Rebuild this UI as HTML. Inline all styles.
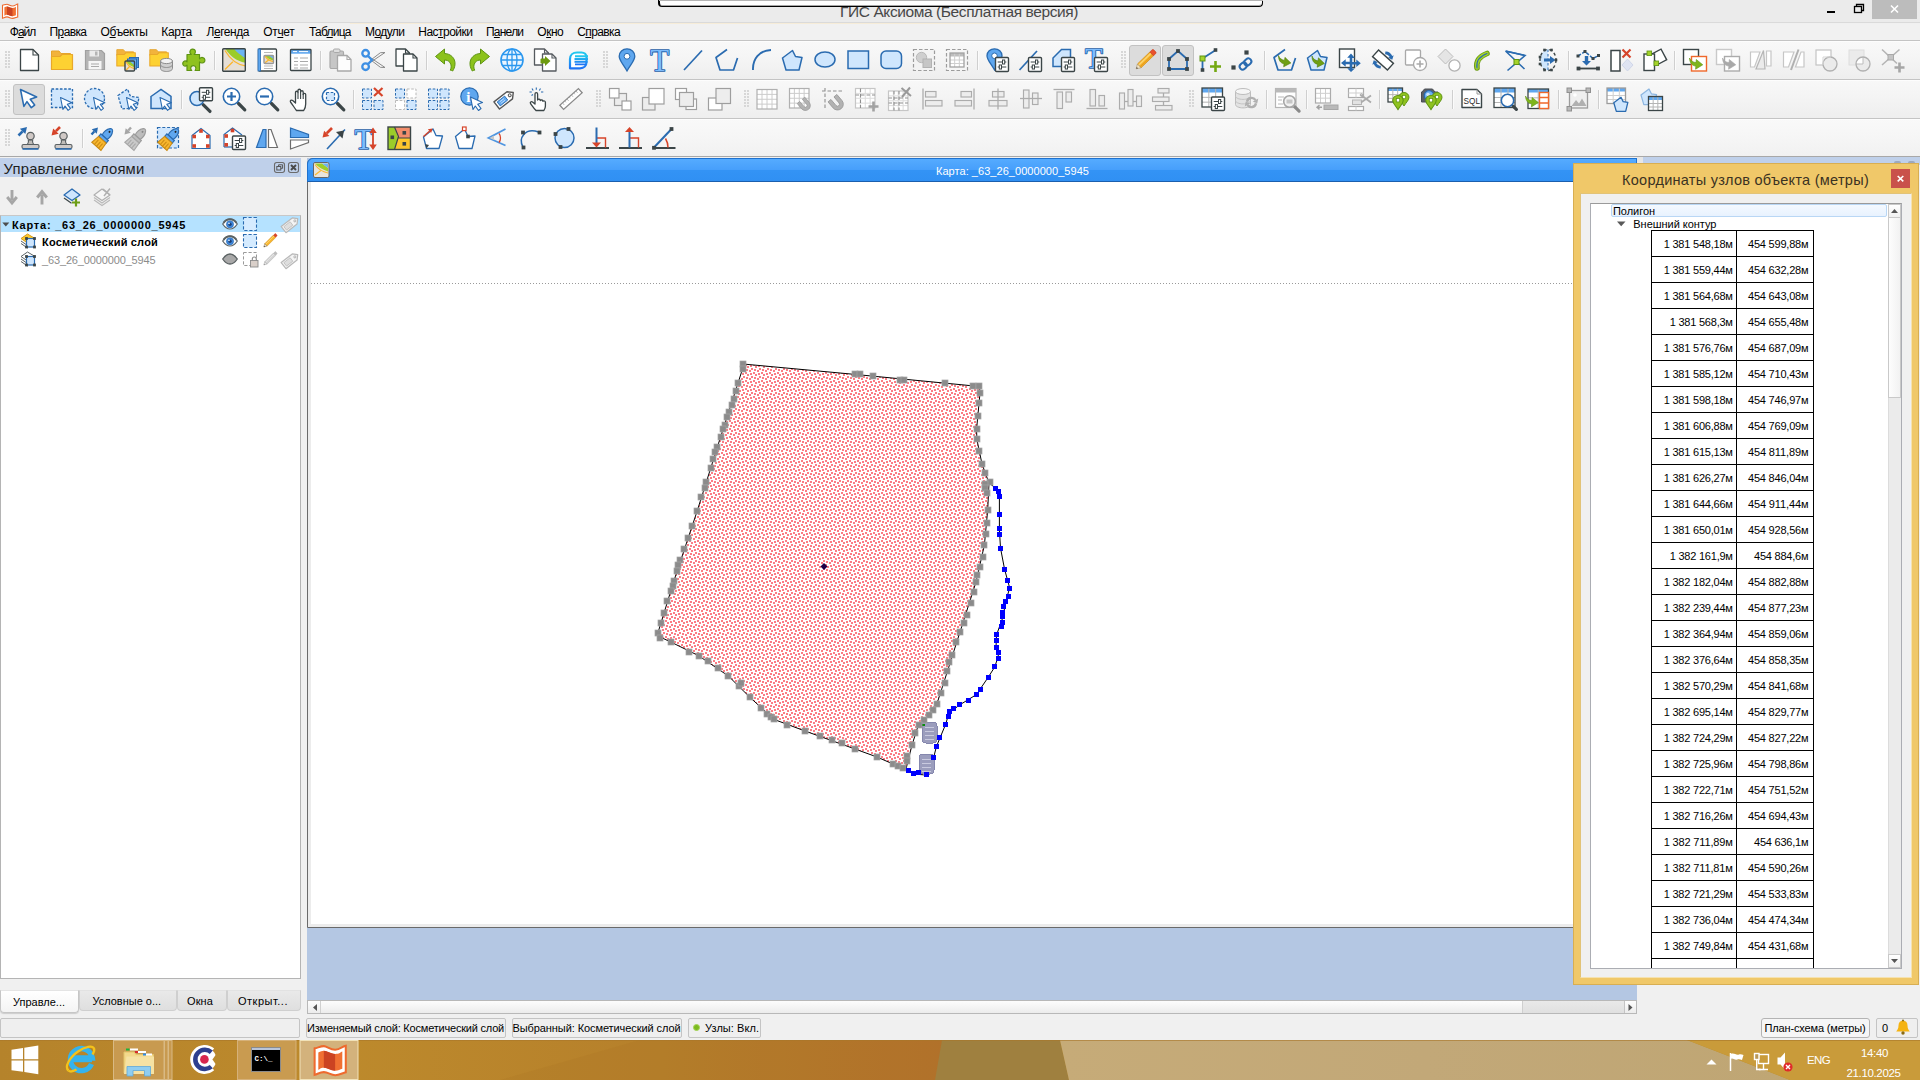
<!DOCTYPE html><html lang="ru"><head><meta charset="utf-8"><title>ГИС Аксиома</title><style>
*{box-sizing:border-box;margin:0;padding:0}
html,body{width:1920px;height:1080px;overflow:hidden;background:#f0f0f0;font-family:"Liberation Sans",sans-serif;font-size:11px;color:#000}
.a,.t,svg.i{position:absolute}
svg.i{overflow:visible}
.t{white-space:nowrap}
.a{display:block}
u{text-decoration:underline;text-underline-offset:1px}
</style></head><body>
<div class="a" style="left:0px;top:0px;width:1920px;height:23px;background:#ebebeb;border-bottom:1px solid #dadada"></div>
<div class="a" style="left:350px;top:23px;width:1250px;height:1px;background:#f6ecd8"></div>
<span class="t" style="left:840.0px;top:4.2px;font-size:15.5px;line-height:15.5px;letter-spacing:-0.407px;color:#484848;font-family:"Liberation Sans",sans-serif;">ГИС Аксиома (Бесплатная версия)</span>
<div class="a" style="left:658px;top:-3px;width:605px;height:10px;background:#fff;border:2px solid #000;border-top:0;border-bottom-width:1px;box-shadow:inset 0 -1px 0 rgba(0,0,0,.35);border-radius:0 0 4px 4px;border-left-width:2px;border-right-width:1px"></div>
<div class="a" style="left:659px;top:0px;width:604px;height:1px;background:#b4b4b4"></div>
<div class="a" style="left:1872px;top:0px;width:45px;height:19px;background:#bcbcbc"></div>
<svg class="i" style="left:1820px;top:0" width="100" height="22" viewBox="0 0 100 22"><rect x="7" y="11" width="8" height="2" fill="#000"/><rect x="34.5" y="6.5" width="7" height="6" fill="none" stroke="#000" stroke-width="1.3"/><path d="M36.5 6V4.5h7v6H42" fill="none" stroke="#000" stroke-width="1.3"/><path d="M71 5.5l7 7m0-7l-7 7" stroke="#fff" stroke-width="1.6"/></svg>
<svg class="i" style="left:0;top:0" width="22" height="22" viewBox="0 0 22 22"><path d="M2.500 5.300C4 5 5.500 4.200 7 4.200S10 6 12.500 6 16 4.300 17.700 4V17C16 17.400 14.500 18.400 12.500 18.400S9 16.900 7 16.900 4 17.800 2.500 18.200Z" fill="#fff" stroke="#ee6a2e" stroke-width="1.100"/><path d="M4.400 7.300C5.500 7 6 6.500 7 6.500S10 8 12.500 8 15 7 15.900 6.800V15.200C15 15.400 14 16.200 12.500 16.200S9 14.800 7 14.800 5.300 15.500 4.400 15.800Z" fill="#f07032"/><path d="M7 6.500C9 6.500 10 8 12.500 8V16.200C10 16.200 9 14.800 7 14.800Z" fill="#cb4322"/></svg>
<div class="a" style="left:0px;top:24px;width:1920px;height:17px;background:#f1f1f1"></div>
<span class="t" style="left:9.7px;top:26.4px;font-size:12px;line-height:12px;letter-spacing:-0.950px;color:#000">Ф<u>а</u>йл</span>
<span class="t" style="left:49.6px;top:26.4px;font-size:12px;line-height:12px;letter-spacing:-0.639px;color:#000">П<u>р</u>авка</span>
<span class="t" style="left:100.6px;top:26.4px;font-size:12px;line-height:12px;letter-spacing:-0.370px;color:#000">О<u>б</u>ъекты</span>
<span class="t" style="left:161.3px;top:26.4px;font-size:12px;line-height:12px;letter-spacing:-0.302px;color:#000">Кар<u>т</u>а</span>
<span class="t" style="left:206.5px;top:26.4px;font-size:12px;line-height:12px;letter-spacing:-0.448px;color:#000">Л<u>е</u>генда</span>
<span class="t" style="left:263.3px;top:26.4px;font-size:12px;line-height:12px;letter-spacing:-0.371px;color:#000">От<u>ч</u>ет</span>
<span class="t" style="left:309.0px;top:26.4px;font-size:12px;line-height:12px;letter-spacing:-0.764px;color:#000">Таб<u>л</u>ица</span>
<span class="t" style="left:365.0px;top:26.4px;font-size:12px;line-height:12px;letter-spacing:-0.614px;color:#000">М<u>о</u>дули</span>
<span class="t" style="left:418.3px;top:26.4px;font-size:12px;line-height:12px;letter-spacing:-0.538px;color:#000">Нас<u>т</u>ройки</span>
<span class="t" style="left:486.0px;top:26.4px;font-size:12px;line-height:12px;letter-spacing:-0.768px;color:#000">П<u>а</u>нели</span>
<span class="t" style="left:537.3px;top:26.4px;font-size:12px;line-height:12px;letter-spacing:-0.471px;color:#000">О<u>к</u>но</span>
<span class="t" style="left:577.3px;top:26.4px;font-size:12px;line-height:12px;letter-spacing:-0.625px;color:#000">С<u>п</u>равка</span>
<div class="a" style="left:0px;top:41px;width:1920px;height:38px;background:linear-gradient(#f9f9f9,#f5f5f5 45%,#eeeeee)"></div>
<div class="a" style="left:0px;top:80px;width:1920px;height:38px;background:linear-gradient(#f8f8f8,#f4f4f4 45%,#eeeeee)"></div>
<div class="a" style="left:0px;top:119px;width:1920px;height:37px;background:linear-gradient(#f9f9f9,#f6f6f6 45%,#f1f1f1)"></div>
<div class="a" style="left:0px;top:40px;width:1920px;height:1px;background:#c4c4c4"></div>
<div class="a" style="left:0px;top:41px;width:1920px;height:1px;background:#fdfdfd"></div>
<div class="a" style="left:0px;top:79px;width:1920px;height:1px;background:#c4c4c4"></div>
<div class="a" style="left:0px;top:80px;width:1920px;height:1px;background:#fdfdfd"></div>
<div class="a" style="left:0px;top:118px;width:1920px;height:1px;background:#c4c4c4"></div>
<div class="a" style="left:0px;top:119px;width:1920px;height:1px;background:#fdfdfd"></div>
<div class="a" style="left:0px;top:156px;width:1920px;height:1px;background:#a8a8a8"></div>
<div class="a" style="left:4.5px;top:51px;width:5px;height:18px;background:radial-gradient(circle at 1px 1px,#d6d6d6 .7px,transparent .95px) 0 0/3px 3px"></div>
<div class="a" style="left:602.5px;top:51px;width:5px;height:18px;background:radial-gradient(circle at 1px 1px,#d6d6d6 .7px,transparent .95px) 0 0/3px 3px"></div>
<div class="a" style="left:1120.5px;top:51px;width:5px;height:18px;background:radial-gradient(circle at 1px 1px,#d6d6d6 .7px,transparent .95px) 0 0/3px 3px"></div>
<div class="a" style="left:4.5px;top:90px;width:5px;height:18px;background:radial-gradient(circle at 1px 1px,#d6d6d6 .7px,transparent .95px) 0 0/3px 3px"></div>
<div class="a" style="left:595.5px;top:90px;width:5px;height:18px;background:radial-gradient(circle at 1px 1px,#d6d6d6 .7px,transparent .95px) 0 0/3px 3px"></div>
<div class="a" style="left:743.5px;top:90px;width:5px;height:18px;background:radial-gradient(circle at 1px 1px,#d6d6d6 .7px,transparent .95px) 0 0/3px 3px"></div>
<div class="a" style="left:1188.5px;top:90px;width:5px;height:18px;background:radial-gradient(circle at 1px 1px,#d6d6d6 .7px,transparent .95px) 0 0/3px 3px"></div>
<div class="a" style="left:4.5px;top:129px;width:5px;height:18px;background:radial-gradient(circle at 1px 1px,#d6d6d6 .7px,transparent .95px) 0 0/3px 3px"></div>
<div class="a" style="left:213.5px;top:51px;width:1px;height:19px;background:#cfcfcf"></div>
<div class="a" style="left:214.5px;top:51px;width:1px;height:19px;background:#fbfbfb"></div>
<div class="a" style="left:320px;top:51px;width:1px;height:19px;background:#cfcfcf"></div>
<div class="a" style="left:321px;top:51px;width:1px;height:19px;background:#fbfbfb"></div>
<div class="a" style="left:425.5px;top:51px;width:1px;height:19px;background:#cfcfcf"></div>
<div class="a" style="left:426.5px;top:51px;width:1px;height:19px;background:#fbfbfb"></div>
<div class="a" style="left:977px;top:51px;width:1px;height:19px;background:#cfcfcf"></div>
<div class="a" style="left:978px;top:51px;width:1px;height:19px;background:#fbfbfb"></div>
<div class="a" style="left:1264px;top:51px;width:1px;height:19px;background:#cfcfcf"></div>
<div class="a" style="left:1265px;top:51px;width:1px;height:19px;background:#fbfbfb"></div>
<div class="a" style="left:1567.5px;top:51px;width:1px;height:19px;background:#cfcfcf"></div>
<div class="a" style="left:1568.5px;top:51px;width:1px;height:19px;background:#fbfbfb"></div>
<div class="a" style="left:1673.5px;top:51px;width:1px;height:19px;background:#cfcfcf"></div>
<div class="a" style="left:1674.5px;top:51px;width:1px;height:19px;background:#fbfbfb"></div>
<div class="a" style="left:180.5px;top:90px;width:1px;height:19px;background:#cfcfcf"></div>
<div class="a" style="left:181.5px;top:90px;width:1px;height:19px;background:#fbfbfb"></div>
<div class="a" style="left:353px;top:90px;width:1px;height:19px;background:#cfcfcf"></div>
<div class="a" style="left:354px;top:90px;width:1px;height:19px;background:#fbfbfb"></div>
<div class="a" style="left:1266px;top:90px;width:1px;height:19px;background:#cfcfcf"></div>
<div class="a" style="left:1267px;top:90px;width:1px;height:19px;background:#fbfbfb"></div>
<div class="a" style="left:1306px;top:90px;width:1px;height:19px;background:#cfcfcf"></div>
<div class="a" style="left:1307px;top:90px;width:1px;height:19px;background:#fbfbfb"></div>
<div class="a" style="left:1379px;top:90px;width:1px;height:19px;background:#cfcfcf"></div>
<div class="a" style="left:1380px;top:90px;width:1px;height:19px;background:#fbfbfb"></div>
<div class="a" style="left:1452px;top:90px;width:1px;height:19px;background:#cfcfcf"></div>
<div class="a" style="left:1453px;top:90px;width:1px;height:19px;background:#fbfbfb"></div>
<div class="a" style="left:1558px;top:90px;width:1px;height:19px;background:#cfcfcf"></div>
<div class="a" style="left:1559px;top:90px;width:1px;height:19px;background:#fbfbfb"></div>
<div class="a" style="left:1598px;top:90px;width:1px;height:19px;background:#cfcfcf"></div>
<div class="a" style="left:1599px;top:90px;width:1px;height:19px;background:#fbfbfb"></div>
<div class="a" style="left:81.5px;top:129px;width:1px;height:19px;background:#cfcfcf"></div>
<div class="a" style="left:82.5px;top:129px;width:1px;height:19px;background:#fbfbfb"></div>
<div class="a" style="left:1129px;top:45px;width:32px;height:31px;background:#dcdcdc;border:1px solid #c2c2c2;border-radius:3px"></div>
<div class="a" style="left:1162px;top:45px;width:32px;height:31px;background:#dcdcdc;border:1px solid #c2c2c2;border-radius:3px"></div>
<div class="a" style="left:13px;top:84px;width:32px;height:31px;background:#dcdcdc;border:1px solid #c2c2c2;border-radius:3px"></div>
<svg class="i" style="left:17px;top:48px" width="24" height="24" viewBox="0 0 24 24"><path d="M3.5 1.5h12.5l5.5 5.5v15.5h-18z" fill="#fff" stroke="#3b4547" stroke-width="1.300" stroke-linejoin="round"/><path d="M16 1.5v5.5h5.5" fill="none" stroke="#3b4547" stroke-width="1.100"/></svg>
<svg class="i" style="left:50px;top:48px" width="24" height="24" viewBox="0 0 24 24"><g transform="translate(0 0) scale(1)"><path d="M1.500 3h7.500l2 2.500h9.500v4H1.500z" fill="#f2b33c" stroke="#e5a52c" stroke-width="1"/><path d="M1.500 21.500V8.500h8.500l2-2h10.500v15z" fill="#fdd132" stroke="#e9a82a" stroke-width="1.200" stroke-linejoin="round"/></g></svg>
<svg class="i" style="left:83px;top:48px" width="24" height="24" viewBox="0 0 24 24"><path d="M2.500 2.500h16l3 3v16h-19z" fill="#b5b5b5" stroke="#a0a0a0" stroke-width="1.200"/><rect x="6.5" y="2.5" width="9.5" height="6" fill="#ececec"/><rect x="12" y="3.5" width="2.5" height="4" fill="#b5b5b5"/><rect x="5.5" y="13" width="13" height="8.5" fill="#f5f5f5"/><path d="M8 16h8M8 18.500h8" fill="none" stroke="#aaa" stroke-width="1.200"/></svg>
<svg class="i" style="left:116px;top:48px" width="24" height="24" viewBox="0 0 24 24"><g transform="translate(-0.5 -1) scale(0.88)"><path d="M1.500 3h7.500l2 2.500h9.500v4H1.500z" fill="#f2b33c" stroke="#e5a52c" stroke-width="1"/><path d="M1.500 21.500V8.500h8.500l2-2h10.500v15z" fill="#fdd132" stroke="#e9a82a" stroke-width="1.200" stroke-linejoin="round"/></g><rect x="13.5" y="9.5" width="9" height="10" fill="#4e98e6" stroke="#2a6bb0" stroke-width="1"/><rect x="11.5" y="11" width="9" height="10" fill="#6fb0f0" stroke="#2a6bb0" stroke-width="1"/><rect x="9" y="13" width="9.5" height="10" fill="#e6dfd6"/><path d="M10.14 13L18.5 13 18.5 19.2 18.5 19.2C14.7 18.5 11.85 16 10.14 13Z" fill="#9bcc2a"/><path d="M13.75 13H18.5V17.2C17.075 16 15.65 15.5 13.75 13Z" fill="#6cb4f3"/><path d="M9.95 13.8C12.325 18 14.7 20 18.5 20.6M9.95 22.2L13.275 18.8" fill="none" stroke="#fbb62f" stroke-width="1.300"/><rect x="9" y="13" width="9.5" height="10" fill="none" rx="1" stroke="#3b4547" stroke-width="1.400"/></svg>
<svg class="i" style="left:149px;top:48px" width="24" height="24" viewBox="0 0 24 24"><g transform="translate(-0.5 -1) scale(0.88)"><path d="M1.500 3h7.500l2 2.500h9.500v4H1.500z" fill="#f2b33c" stroke="#e5a52c" stroke-width="1"/><path d="M1.500 21.500V8.500h8.500l2-2h10.500v15z" fill="#fdd132" stroke="#e9a82a" stroke-width="1.200" stroke-linejoin="round"/></g><path d="M11.500 13v7.500c0 1.700 2.700 3 6 3s6-1.300 6-3V13z" fill="#cfcfcf" stroke="#8d8d8d" stroke-width="1"/><ellipse cx="17.5" cy="13" rx="6" ry="2.6" fill="#f2f2f2" stroke="#8d8d8d" stroke-width="1"/><path d="M11.500 16.500c0 1.700 2.700 3 6 3s6-1.300 6-3" fill="none" stroke="#8d8d8d" stroke-width="1"/></svg>
<svg class="i" style="left:182px;top:48px" width="24" height="24" viewBox="0 0 24 24"><path d="M5 6.500h4.200c-1.300-1.200-1.600-2.700-.9-4 .8-1.500 3-1.900 4.300-.7 1.200 1.100 1 3.300-.4 4.700H17.500v4.300c1.200-1.300 2.800-1.600 4-.9 1.500.8 1.900 3 .7 4.300-1.100 1.200-3.300 1-4.700-.4V22.500h-4.400c1-1.300 1.100-2.800.3-3.900-.9-1.200-2.700-1.400-3.800-.4-1.200 1.100-1.200 3 .1 4.300H5v-5.300c-1.200 1-2.600 1-3.500.1-1-1-1-2.700.1-3.700 1-.9 2.400-.8 3.400.2z" fill="#8fc21f" stroke="#5e9413" stroke-width="1.200" stroke-linejoin="round"/></svg>
<svg class="i" style="left:222px;top:48px" width="24" height="24" viewBox="0 0 24 24"><rect x="0.7" y="0.7" width="22.6" height="22.6" fill="#e6dfd6"/><path d="M3.412 0.7L23.3 0.7 23.3 14.712 23.3 14.712C14.26 13.13 7.48 7.48 3.412 0.7Z" fill="#9bcc2a"/><path d="M12 0.7H23.3V10.192C19.91 7.48 16.52 6.35 12 0.7Z" fill="#6cb4f3"/><path d="M2.96 2.508C8.61 12 14.26 16.52 23.3 17.876M2.96 21.492L10.87 13.808" fill="none" stroke="#fbb62f" stroke-width="1.300"/><rect x="0.7" y="0.7" width="22.6" height="22.6" fill="none" rx="1" stroke="#3b4547" stroke-width="1.400"/></svg>
<svg class="i" style="left:255px;top:48px" width="24" height="24" viewBox="0 0 24 24"><rect x="3.5" y="1" width="18" height="22" fill="#fff" rx="1" stroke="#3b4547" stroke-width="1.300"/><rect x="3" y="1" width="2.6" height="22" fill="#5fa7ef" stroke="#2a6bb0" stroke-width=".8"/><path d="M9 4.500h9M9 18h9M9 20.500h9" fill="none" stroke="#b9b9b9" stroke-width="1"/><rect x="9" y="7.5" width="9.5" height="8" fill="#e6dfd6"/><path d="M10.14 7.5L18.5 7.5 18.5 12.46 18.5 12.46C14.7 11.9 11.85 9.9 10.14 7.5Z" fill="#9bcc2a"/><path d="M13.75 7.5H18.5V10.86C17.075 9.9 15.65 9.5 13.75 7.5Z" fill="#6cb4f3"/><path d="M9.95 8.14C12.325 11.5 14.7 13.1 18.5 13.58M9.95 14.86L13.275 12.14" fill="none" stroke="#fbb62f" stroke-width="1.300"/><rect x="9" y="7.5" width="9.5" height="8" fill="none" rx="1" stroke="#9a9a9a" stroke-width="1.400"/></svg>
<svg class="i" style="left:288px;top:48px" width="24" height="24" viewBox="0 0 24 24"><rect x="2.5" y="1.5" width="20.5" height="21" fill="#fff"/><rect x="2.5" y="1.5" width="20.5" height="4.2" fill="#5fa7ef"/><path d="M5 3.600h4M11 3.600h9" fill="none" stroke="#fff" stroke-width="1"/><path d="M6 10h4M12 10h8M6 13.500h4M12 13.500h8M6 17h4M12 17h8M6 20h4M12 20h8" fill="none" stroke="#a9a9a9" stroke-width="1"/><rect x="2.5" y="1.5" width="20.5" height="21" fill="none" rx="0.8" stroke="#3b4547" stroke-width="1.300"/></svg>
<svg class="i" style="left:328px;top:48px" width="24" height="24" viewBox="0 0 24 24"><rect x="2" y="3" width="13.5" height="17.5" fill="#c6c6c6" rx="1.5" stroke="#a8a8a8" stroke-width="1.200"/><rect x="5.5" y="1" width="6.5" height="3.5" fill="#dedede" rx="1.2" stroke="#a8a8a8" stroke-width="1"/><path d="M9.5 7.5h9.5l4 4v11.5h-13.5z" fill="#fdfdfd" stroke="#a8a8a8" stroke-width="1.300" stroke-linejoin="round"/><path d="M19 7.5v4h4" fill="none" stroke="#a8a8a8" stroke-width="1.100"/></svg>
<svg class="i" style="left:361px;top:48px" width="24" height="24" viewBox="0 0 24 24"><path d="M8.500 9L24 19.500l-4.600-.2L10.500 12.500zM8.500 15L24 4.500l-4.600.2L10.500 11.500z" fill="#f4f4f4" stroke="#8b8b8b" stroke-width="1" stroke-linejoin="round"/><circle cx="4.6" cy="5.3" r="3.3" fill="none" stroke="#3d8fe4" stroke-width="2.300"/><circle cx="4.6" cy="18.7" r="3.3" fill="none" stroke="#3d8fe4" stroke-width="2.300"/><path d="M6.800 7.800l4.200 4.200-4.200 4.200" fill="none" stroke="#3d8fe4" stroke-width="2.300"/></svg>
<svg class="i" style="left:394px;top:48px" width="24" height="24" viewBox="0 0 24 24"><path d="M2 1h9.5l4 4v13h-13.5z" fill="#fff" stroke="#3b4547" stroke-width="1.300" stroke-linejoin="round"/><path d="M11.5 1v4h4" fill="none" stroke="#3b4547" stroke-width="1.100"/><path d="M9.5 6h9.5l4 4v13h-13.5z" fill="#fff" stroke="#3b4547" stroke-width="1.300" stroke-linejoin="round"/><path d="M19 6v4h4" fill="none" stroke="#3b4547" stroke-width="1.100"/></svg>
<svg class="i" style="left:434px;top:48px" width="24" height="24" viewBox="0 0 24 24"><path d="M1.500 8.500L10.500 1v4.500c6 .2 11 4.500 10.500 11-.2 2.500-1.200 4.800-2.300 6.500-.8-.5-1.700-.8-2.400-.8 1.300-2.600 1.200-5.600-.5-7.800-1.300-1.600-3.200-2.400-5.300-2.400V16z" fill="#8cc21c" stroke="#5e9413" stroke-width="1" stroke-linejoin="round"/></svg>
<svg class="i" style="left:467px;top:48px" width="24" height="24" viewBox="0 0 24 24"><g transform="translate(24 0) scale(-1 1)"><path d="M1.500 8.500L10.500 1v4.500c6 .2 11 4.500 10.500 11-.2 2.500-1.200 4.800-2.300 6.500-.8-.5-1.700-.8-2.400-.8 1.300-2.600 1.200-5.600-.5-7.800-1.300-1.600-3.200-2.400-5.300-2.400V16z" fill="#8cc21c" stroke="#5e9413" stroke-width="1" stroke-linejoin="round"/></g></svg>
<svg class="i" style="left:500px;top:48px" width="24" height="24" viewBox="0 0 24 24"><circle cx="12" cy="12" r="11" fill="#eaf5ff" stroke="#2b97ee" stroke-width="1.600"/><ellipse cx="12" cy="12" rx="5" ry="11" fill="none" stroke="#2b97ee" stroke-width="1.300"/><path d="M12 1v22M1 12h22M2.800 6.500h18.400M2.800 17.500h18.400" fill="none" stroke="#2b97ee" stroke-width="1.300"/></svg>
<svg class="i" style="left:533px;top:48px" width="24" height="24" viewBox="0 0 24 24"><path d="M1.5 1h10l4 4v12h-14z" fill="#fff" stroke="#555a5f" stroke-width="1.300" stroke-linejoin="round"/><path d="M11.5 1v4h4" fill="none" stroke="#555a5f" stroke-width="1.100"/><path d="M9.5 6h9.5l4 4v13h-13.5z" fill="#fff" stroke="#555a5f" stroke-width="1.300" stroke-linejoin="round"/><path d="M19 6v4h4" fill="none" stroke="#555a5f" stroke-width="1.100"/><path d="M7.500 11.300c0-.5.400-.9.900-.9h3.600V8l5.500 5-5.500 5v-2.400H8.400c-.5 0-.9-.4-.9-.9z" fill="#6d9a0f"/></svg>
<svg class="i" style="left:566px;top:48px" width="24" height="24" viewBox="0 0 24 24"><defs><linearGradient id="lg578" x1="0" y1="0" x2="0" y2="1"><stop offset="0" stop-color="#22c9ee"/><stop offset="1" stop-color="#1f73f5"/></linearGradient></defs><path d="M4 20.300V11C4 7 7 4.500 11 4.500h4.500c3 0 5 2 5 4.800V14c0 3.500-2.500 6.300-6.500 6.300z" fill="#fff" stroke="url(#lg578)" stroke-width="2.200" stroke-linejoin="round"/><path d="M9 8.300h13M8.500 11h13.500M8.500 13.700h13M9 16.400h11" fill="none" stroke="url(#lg578)" stroke-width="1.900"/></svg>
<svg class="i" style="left:615px;top:48px" width="24" height="24" viewBox="0 0 24 24"><path d="M12 23C8 16 4.200 12.500 4.200 8.300 4.200 4 7.700.8 12 .8s7.800 3.200 7.800 7.500C19.800 12.500 16 16 12 23z" fill="#5fa7ef" stroke="#2a6bb0" stroke-width="1.300"/><circle cx="12" cy="8.3" r="2.9" fill="#fff" stroke="#2a6bb0" stroke-width="1"/></svg>
<svg class="i" style="left:648px;top:48px" width="24" height="24" viewBox="0 0 24 24"><text x="2.3" y="23.4" font-family="Liberation Serif,serif" font-size="31" fill="#7dbcfc" stroke="#1f5fa8" stroke-width="1.700" paint-order="stroke" stroke-linejoin="round">T</text></svg>
<svg class="i" style="left:681px;top:48px" width="24" height="24" viewBox="0 0 24 24"><path d="M3 22L21 2.500" fill="none" stroke="#2a6bb0" stroke-width="1.700"/></svg>
<svg class="i" style="left:714px;top:48px" width="24" height="24" viewBox="0 0 24 24"><path d="M14.500 1.500L3.500 9.500l4 12.500h13.500l4-12" fill="none" stroke="#2a6bb0" stroke-width="1.700" stroke-linejoin="round" transform="translate(-1.500 0)"/></svg>
<svg class="i" style="left:747px;top:48px" width="24" height="24" viewBox="0 0 24 24"><path d="M6 22C5.500 11 12 2.500 24 2" fill="none" stroke="#2a6bb0" stroke-width="1.900"/></svg>
<svg class="i" style="left:780px;top:48px" width="24" height="24" viewBox="0 0 24 24"><path d="M2.500 10L12.500 2.500 15.500 8.500 22 9.500 19 22H6Z" fill="#cfe6fd" stroke="#2a6bb0" stroke-width="1.500" stroke-linejoin="round"/></svg>
<svg class="i" style="left:813px;top:48px" width="24" height="24" viewBox="0 0 24 24"><ellipse cx="12" cy="11.5" rx="10" ry="7.6" fill="#cfe6fd" stroke="#2a6bb0" stroke-width="1.500"/></svg>
<svg class="i" style="left:846px;top:48px" width="24" height="24" viewBox="0 0 24 24"><rect x="2" y="3" width="20.5" height="17.5" fill="#cfe6fd" stroke="#2a6bb0" stroke-width="1.500"/></svg>
<svg class="i" style="left:879px;top:48px" width="24" height="24" viewBox="0 0 24 24"><rect x="2" y="3" width="20.5" height="17.5" fill="#cfe6fd" rx="5" stroke="#2a6bb0" stroke-width="1.500"/></svg>
<svg class="i" style="left:912px;top:48px" width="24" height="24" viewBox="0 0 24 24"><rect x="1.5" y="1.5" width="21" height="21" fill="#f3f3f3" stroke="#9c9c9c" stroke-width="1.200" stroke-dasharray="3.500 2"/><circle cx="9.5" cy="9.5" r="5.2" fill="#cfcfcf" stroke="#b9b9b9" stroke-width="1"/><rect x="11" y="11" width="8.5" height="8.5" fill="#c6c6c6" stroke="#b2b2b2" stroke-width="1"/></svg>
<svg class="i" style="left:945px;top:48px" width="24" height="24" viewBox="0 0 24 24"><rect x="1.5" y="1.5" width="21" height="21" fill="#f6f6f6" stroke="#9c9c9c" stroke-width="1.200" stroke-dasharray="3.500 2"/><rect x="5" y="5" width="14" height="14" fill="#fff"/><rect x="5" y="5" width="14" height="3.5" fill="#bdbdbd"/><path d="M5 12h14M5 15.5h14M9.66667 5v14M14.3333 5v14" fill="none" stroke="#cfcfcf" stroke-width="1"/><rect x="5" y="5" width="14" height="14" fill="none" stroke="#a2a2a2" stroke-width="1.300"/></svg>
<svg class="i" style="left:985px;top:48px" width="24" height="24" viewBox="0 0 24 24"><path d="M9.500 22C6 15.500 2 12 2 7.800 2 3.800 5.300.8 9.500.8S17 3.800 17 7.800C17 12 13 15.500 9.500 22z" fill="#5fa7ef" stroke="#2a6bb0" stroke-width="1.300"/><circle cx="9.5" cy="7.8" r="2.8" fill="#fff" stroke="#2a6bb0" stroke-width="1"/><rect x="10.5" y="9.5" width="13" height="14" fill="#fff" rx="1" stroke="#3b4547" stroke-width="1.400"/><path d="M12.7 14h8.6 M12.7 19h8.6" fill="none" stroke="#3b4547" stroke-width="1"/><rect x="17.5" y="12" width="2.2" height="4" fill="#fff" stroke="#3b4547" stroke-width="1"/><rect x="14.3" y="17" width="2.2" height="4" fill="#fff" stroke="#3b4547" stroke-width="1"/></svg>
<svg class="i" style="left:1018px;top:48px" width="24" height="24" viewBox="0 0 24 24"><path d="M1.500 22L19 3" fill="none" stroke="#2a6bb0" stroke-width="1.700"/><rect x="10.5" y="9.5" width="13" height="14" fill="#fff" rx="1" stroke="#3b4547" stroke-width="1.400"/><path d="M12.7 14h8.6 M12.7 19h8.6" fill="none" stroke="#3b4547" stroke-width="1"/><rect x="17.5" y="12" width="2.2" height="4" fill="#fff" stroke="#3b4547" stroke-width="1"/><rect x="14.3" y="17" width="2.2" height="4" fill="#fff" stroke="#3b4547" stroke-width="1"/></svg>
<svg class="i" style="left:1051px;top:48px" width="24" height="24" viewBox="0 0 24 24"><path d="M2 18.500V10L10.500 1.500h9V18.500z" fill="#cfe6fd" stroke="#2a6bb0" stroke-width="1.500"/><rect x="10.5" y="9.5" width="13" height="14" fill="#fff" rx="1" stroke="#3b4547" stroke-width="1.400"/><path d="M12.7 14h8.6 M12.7 19h8.6" fill="none" stroke="#3b4547" stroke-width="1"/><rect x="17.5" y="12" width="2.2" height="4" fill="#fff" stroke="#3b4547" stroke-width="1"/><rect x="14.3" y="17" width="2.2" height="4" fill="#fff" stroke="#3b4547" stroke-width="1"/></svg>
<svg class="i" style="left:1084px;top:48px" width="24" height="24" viewBox="0 0 24 24"><text x="1" y="20.3" font-family="Liberation Serif,serif" font-size="29" fill="#7dbcfc" stroke="#1f5fa8" stroke-width="1.700" paint-order="stroke" stroke-linejoin="round">T</text><rect x="10.5" y="9.5" width="13" height="14" fill="#fff" rx="1" stroke="#3b4547" stroke-width="1.400"/><path d="M12.7 14h8.6 M12.7 19h8.6" fill="none" stroke="#3b4547" stroke-width="1"/><rect x="17.5" y="12" width="2.2" height="4" fill="#fff" stroke="#3b4547" stroke-width="1"/><rect x="14.3" y="17" width="2.2" height="4" fill="#fff" stroke="#3b4547" stroke-width="1"/></svg>
<svg class="i" style="left:1133px;top:48px" width="24" height="24" viewBox="0 0 24 24"><g transform="translate(3.200 20.800) rotate(-44)"><path d="M4.200-2.600H21.500V2.600H4.200z" fill="#f8b62d" stroke="#cf8a17" stroke-width=".7"/><path d="M4.200-.9H21.500" fill="none" stroke="#fcd675" stroke-width="1.300"/><path d="M4.200 1.300H21.500" fill="none" stroke="#e79c1e" stroke-width="1"/><path d="M21.500-2.600h3c.8 0 1.300.5 1.300 1.300v2.600c0 .8-.5 1.300-1.300 1.300h-3z" fill="#e9512d" stroke="#c43d1e" stroke-width=".6"/><path d="M0 0L4.200-2.600V2.600z" fill="#f4e6cb" stroke="#a89166" stroke-width=".6"/><path d="M0 0l1.700-1v2z" fill="#444"/></g></svg>
<svg class="i" style="left:1166px;top:48px" width="24" height="24" viewBox="0 0 24 24"><path d="M12 3L21 11v10H3V11z" fill="none" stroke="#2a6bb0" stroke-width="1.800"/><rect x="10.1" y="1.1" width="3.8" height="3.8" fill="#3b4547"/><rect x="19.1" y="9.1" width="3.8" height="3.8" fill="#3b4547"/><rect x="19.1" y="19.1" width="3.8" height="3.8" fill="#3b4547"/><rect x="1.1" y="19.1" width="3.8" height="3.8" fill="#3b4547"/><rect x="1.1" y="9.1" width="3.8" height="3.8" fill="#3b4547"/></svg>
<svg class="i" style="left:1199px;top:48px" width="24" height="24" viewBox="0 0 24 24"><path d="M3.500 22V10.500L16 2.500" fill="none" stroke="#2a6bb0" stroke-width="1.800"/><rect x="14.7" y="0.2" width="3.6" height="3.6" fill="#3b4547"/><rect x="1.7" y="20.2" width="3.6" height="3.6" fill="#3b4547"/><rect x="1" y="8" width="5" height="5" fill="#a5d32a" stroke="#5e9413" stroke-width="1"/><path d="M11 18.500h11M16.500 13v11" fill="none" stroke="#74a812" stroke-width="2.600"/></svg>
<svg class="i" style="left:1232px;top:48px" width="24" height="24" viewBox="0 0 24 24"><rect x="12.4" y="2.4" width="4.2" height="4.2" fill="#3b4547"/><rect x="-0.6" y="17.4" width="4.2" height="4.2" fill="#3b4547"/><g transform="translate(13.500 16) rotate(-42)"><rect x="-6.8" y="-3" width="7.6" height="6" fill="none" rx="3" stroke="#2a6bb0" stroke-width="2"/><rect x="-0.8" y="-3" width="7.6" height="6" fill="none" rx="3" stroke="#2a6bb0" stroke-width="2"/></g></svg>
<svg class="i" style="left:1272px;top:48px" width="24" height="24" viewBox="0 0 24 24"><path d="M14.500 1.500L3.500 9.500l4 12.500h13.500l4-12" fill="none" stroke="#2a6bb0" stroke-width="1.700" stroke-linejoin="round" transform="translate(-1.500 0)"/><g transform="translate(6.500 7.500) rotate(8) scale(.95)"><path d="M0 0C1.500 2.800 4 4.200 7 4.200V1L14 6 7 11V7.800C3 7.800 .5 4.500 0 0Z" fill="#6f9f14" stroke="#547f0c" stroke-width=".600" stroke-linejoin="round"/></g></svg>
<svg class="i" style="left:1305px;top:48px" width="24" height="24" viewBox="0 0 24 24"><path d="M2.500 10L12.500 2.500 15.500 8.500 22 9.500 19 22H6Z" fill="#cfe6fd" stroke="#2a6bb0" stroke-width="1.500" stroke-linejoin="round"/><g transform="translate(7 8) rotate(8) scale(.95)"><path d="M0 0C1.500 2.800 4 4.200 7 4.200V1L14 6 7 11V7.800C3 7.800 .5 4.500 0 0Z" fill="#6f9f14" stroke="#547f0c" stroke-width=".600" stroke-linejoin="round"/></g></svg>
<svg class="i" style="left:1338px;top:48px" width="24" height="24" viewBox="0 0 24 24"><rect x="1.5" y="1" width="15" height="18.5" fill="#fff" stroke="#3b4547" stroke-width="1.400"/><path d="M13 5.500l3.800 4.500h-2.500v4h4v-2.500l4.500 3.800-4.500 3.800v-2.500h-4v4h2.500L13 24l-3.800-3.800h2.500v-4h-4v2.500L3 15l4.700-3.800v2.500h4v-4H9.200z" fill="#2a6bb0"/></svg>
<svg class="i" style="left:1371px;top:48px" width="24" height="24" viewBox="0 0 24 24"><g transform="translate(12 12) rotate(42)"><rect x="-10" y="-4.5" width="20" height="9" fill="#fff" stroke="#3b4547" stroke-width="1.400"/></g><path d="M16.500 4.500c3 .5 5 3 5.500 6l1.500-.3-2.500 4-3.500-3 1.800-.3c-.5-2-2-3.500-3.800-4zM7.500 19.500c-3-.5-5-3-5.500-6l-1.500.3 2.500-4 3.500 3-1.800.3c.5 2 2 3.500 3.800 4z" fill="#2a6bb0" transform="rotate(-15 12 12)"/></svg>
<svg class="i" style="left:1404px;top:48px" width="24" height="24" viewBox="0 0 24 24"><rect x="1.5" y="2" width="15" height="15" fill="#fff" rx="1" stroke="#a9a9a9" stroke-width="1.300"/><circle cx="16" cy="16" r="6.5" fill="#fff" stroke="#a9a9a9" stroke-width="1.300"/><path d="M12.500 16h7M16 12.500v7" fill="none" stroke="#a9a9a9" stroke-width="1.600"/></svg>
<svg class="i" style="left:1437px;top:48px" width="24" height="24" viewBox="0 0 24 24"><path d="M8.500 1L16 8.500 8.500 16 1 8.500z" fill="#e5e5e5" stroke="#bdbdbd" stroke-width="1"/><circle cx="17.5" cy="17.5" r="5.6" fill="#fff" stroke="#b2b2b2" stroke-width="1.300"/></svg>
<svg class="i" style="left:1470px;top:48px" width="24" height="24" viewBox="0 0 24 24"><path d="M7 20C6 14 9 8.500 17 5.500" fill="none" stroke="#6d9d16" stroke-width="5.600" stroke-linecap="round"/><path d="M7 20C6 14 9 8.500 17 5.500" fill="none" stroke="#a6d32c" stroke-width="3.500" stroke-linecap="round"/><path d="M7 20C6 14 9 8.500 17 5.500" fill="none" stroke="#2a6bb0" stroke-width="1.100" stroke-linecap="round"/></svg>
<svg class="i" style="left:1503px;top:48px" width="24" height="24" viewBox="0 0 24 24"><path d="M2.500 3L22 7.500 4.500 22.500M21.500 21L2.500 3" fill="none" stroke="#2a6bb0" stroke-width="1.600"/><path d="M3 3.200L21.500 7.300" fill="none" stroke="#2a6bb0" stroke-width="1.600"/><rect x="11" y="11.5" width="5" height="5" fill="#a5d32a" stroke="#5e9413" stroke-width="1"/></svg>
<svg class="i" style="left:1536px;top:48px" width="24" height="24" viewBox="0 0 24 24"><path d="M12 1.500A7.500 10.500 0 0 0 12 22.500z" fill="#cfe6fd"/><ellipse cx="12" cy="12" rx="8" ry="10.5" fill="none" stroke="#3b4547" stroke-width="1.400" stroke-dasharray="3 2.600"/><path d="M12 1.500v21" fill="none" stroke="#2a6bb0" stroke-width="1" stroke-dasharray="2.500 2"/><path d="M8 10.500h6V8l5.500 4-5.500 4v-2.500H8z" fill="#2a6bb0"/><rect x="7.2" y="0.7" width="2.6" height="2.6" fill="#3b4547"/><rect x="14.2" y="0.7" width="2.6" height="2.6" fill="#3b4547"/><rect x="2.7" y="7.7" width="2.6" height="2.6" fill="#3b4547"/><rect x="2.7" y="14.7" width="2.6" height="2.6" fill="#3b4547"/><rect x="7.2" y="20.7" width="2.6" height="2.6" fill="#3b4547"/><rect x="14.2" y="20.7" width="2.6" height="2.6" fill="#3b4547"/><rect x="18.7" y="10.7" width="2.6" height="2.6" fill="#3b4547"/></svg>
<svg class="i" style="left:1576px;top:48px" width="24" height="24" viewBox="0 0 24 24"><path d="M2 8l7-4.500 8 7 5.500-3" fill="none" stroke="#2a6bb0" stroke-width="1.500" stroke-dasharray="3.500 1.500"/><rect x="0.5" y="6.5" width="3" height="3" fill="#3b4547"/><rect x="7.5" y="2" width="3" height="3" fill="#3b4547"/><rect x="15.5" y="9" width="3" height="3" fill="#3b4547"/><rect x="21" y="6" width="3" height="3" fill="#3b4547"/><path d="M2 20.500h21" fill="none" stroke="#3b4547" stroke-width="1.800"/><rect x="0.6" y="18.6" width="3.8" height="3.8" fill="#3b4547"/><rect x="20.1" y="18.6" width="3.8" height="3.8" fill="#3b4547"/><path d="M8 8.500h3.400v5h2.800l-4.500 4.500-4.500-4.500H8z" fill="#2a6bb0" transform="translate(.8 -.5)"/></svg>
<svg class="i" style="left:1609px;top:48px" width="24" height="24" viewBox="0 0 24 24"><rect x="2" y="2.5" width="9" height="20.5" fill="#fff" stroke="#3b4547" stroke-width="1.500"/><path d="M13.500 1.500l8 8M21.500 1.500l-8 8" fill="none" stroke="#d6442a" stroke-width="2.200"/><path d="M18.500 11l5.500 6-5.500 6-5.500-6z" fill="#dfe4f2" stroke="#c9d0e6" stroke-width=".8"/></svg>
<svg class="i" style="left:1642px;top:48px" width="24" height="24" viewBox="0 0 24 24"><g transform="translate(17 9) rotate(-28)"><rect x="-5.5" y="-6" width="11" height="12" fill="#fff" stroke="#3b4547" stroke-width="1.400"/></g><rect x="2" y="6" width="10.5" height="16.5" fill="#fff" stroke="#3b4547" stroke-width="1.400"/><rect x="5" y="3" width="4.6" height="4.6" fill="#a5d32a" stroke="#5e9413" stroke-width=".8"/><rect x="12" y="13" width="4.6" height="4.6" fill="#a5d32a" stroke="#5e9413" stroke-width=".8"/></svg>
<svg class="i" style="left:1682px;top:48px" width="24" height="24" viewBox="0 0 24 24"><rect x="1.5" y="1.5" width="15" height="15" fill="#fff" stroke="#3b4547" stroke-width="1.400"/><rect x="9.5" y="8.5" width="15" height="14.5" fill="#fff" stroke="#f0682b" stroke-width="1.400"/><g transform="translate(7.500 10) rotate(4) scale(.98)"><path d="M0 0C1.500 2.800 4 4.200 7 4.200V1L14 6 7 11V7.800C3 7.800 .5 4.500 0 0Z" fill="#7fb51c" stroke="#5e9413" stroke-width=".600" stroke-linejoin="round"/></g></svg>
<svg class="i" style="left:1715px;top:48px" width="24" height="24" viewBox="0 0 24 24"><rect x="1.5" y="1.5" width="15" height="15" fill="#fff" stroke="#c9c9c9" stroke-width="1.400"/><rect x="9.5" y="8.5" width="15" height="14.5" fill="#fff" stroke="#ababab" stroke-width="1.400"/><g transform="translate(7.500 10) rotate(4) scale(.98)"><path d="M0 0C1.500 2.800 4 4.200 7 4.200V1L14 6 7 11V7.800C3 7.800 .5 4.500 0 0Z" fill="#a9a9a9" stroke="#a9a9a9" stroke-width=".600" stroke-linejoin="round"/></g></svg>
<svg class="i" style="left:1748px;top:48px" width="24" height="24" viewBox="0 0 24 24"><path d="M2.500 4h9.500L6.500 19H2.500zM18.500 3h4.500v15h-4.500z" fill="#fff" stroke="#c6c6c6" stroke-width="1.200"/><path d="M15.500 2.500L8 21h9z" fill="#ebebeb" stroke="#b5b5b5" stroke-width="1.200"/></svg>
<svg class="i" style="left:1781px;top:48px" width="24" height="24" viewBox="0 0 24 24"><path d="M2.500 4h10.500L7.500 19H2.500zM20 4h3v15H14.500z" fill="#fff" stroke="#c6c6c6" stroke-width="1.200"/><path d="M17.500 1.500L10 22" fill="none" stroke="#b0b0b0" stroke-width="2"/></svg>
<svg class="i" style="left:1814px;top:48px" width="24" height="24" viewBox="0 0 24 24"><rect x="2" y="2" width="15" height="15" fill="#fff" stroke="#c4c4c4" stroke-width="1.200"/><circle cx="16" cy="16" r="7" fill="#ebebeb" stroke="#b0b0b0" stroke-width="1.300"/><path d="M9 17V9h8" fill="none" stroke="#d5d5d5" stroke-width="1"/></svg>
<svg class="i" style="left:1847px;top:48px" width="24" height="24" viewBox="0 0 24 24"><rect x="2" y="2" width="15" height="15" fill="#ebebeb" stroke="#dedede" stroke-width="1"/><circle cx="16" cy="16" r="7" fill="#ebebeb"/><path d="M16 16V9A7 7 0 0 0 9 16z" fill="#fff"/><path d="M9 16h7V9" fill="none" stroke="#bdbdbd" stroke-width="1"/><circle cx="16" cy="16" r="7" fill="none" stroke="#b0b0b0" stroke-width="1.300"/></svg>
<svg class="i" style="left:1880px;top:48px" width="24" height="24" viewBox="0 0 24 24"><path d="M2 1.500L17 15.500M19.500 1.500L2 17" fill="none" stroke="#b5b5b5" stroke-width="1.600"/><rect x="8" y="6.5" width="5.5" height="5.5" fill="#c4c4c4" stroke="#a9a9a9" stroke-width="1"/><path d="M14.500 19.500h10M19.500 14.500v10" fill="none" stroke="#a6a6a6" stroke-width="2.600"/></svg>
<svg class="i" style="left:17px;top:87px" width="24" height="24" viewBox="0 0 24 24"><g transform="translate(3.5 2.5) scale(1.35)"><path d="M0 0L12 5.500 7.200 7.200 10.500 11.500 8 13.500 4.800 9 2.500 12.500Z" fill="#fff" stroke="#2a6bb0" stroke-width="1.150" stroke-linejoin="round"/></g></svg>
<svg class="i" style="left:50px;top:87px" width="24" height="24" viewBox="0 0 24 24"><rect x="1.5" y="2" width="21" height="18.5" fill="#cfe6fd" stroke="#2a6bb0" stroke-width="1.300" stroke-dasharray="2.600 1.600"/><g transform="translate(10.5 10.5) scale(0.95)"><path d="M0 0L12 5.500 7.200 7.200 10.500 11.500 8 13.500 4.800 9 2.500 12.500Z" fill="#fff" stroke="#2a6bb0" stroke-width="1.150" stroke-linejoin="round"/></g></svg>
<svg class="i" style="left:83px;top:87px" width="24" height="24" viewBox="0 0 24 24"><circle cx="11.5" cy="11.5" r="10" fill="#cfe6fd" stroke="#2a6bb0" stroke-width="1.300" stroke-dasharray="2.600 1.600"/><g transform="translate(10.5 10.5) scale(0.95)"><path d="M0 0L12 5.500 7.200 7.200 10.500 11.500 8 13.500 4.800 9 2.500 12.500Z" fill="#fff" stroke="#2a6bb0" stroke-width="1.150" stroke-linejoin="round"/></g></svg>
<svg class="i" style="left:116px;top:87px" width="24" height="24" viewBox="0 0 24 24"><path d="M2 8.500L11.500 2l3 7.500 8.500 1L21 20.500 6 22z" fill="#cfe6fd" stroke="#2a6bb0" stroke-width="1.300" stroke-dasharray="2.600 1.600"/><g transform="translate(10.5 10.5) scale(0.95)"><path d="M0 0L12 5.500 7.200 7.200 10.500 11.500 8 13.500 4.800 9 2.500 12.500Z" fill="#fff" stroke="#2a6bb0" stroke-width="1.150" stroke-linejoin="round"/></g></svg>
<svg class="i" style="left:149px;top:87px" width="24" height="24" viewBox="0 0 24 24"><path d="M2 9.500L12 2.500 22 9.500V21.500H2z" fill="#cfe6fd" stroke="#2a6bb0" stroke-width="1.500"/><g transform="translate(11 10.5) scale(0.95)"><path d="M0 0L12 5.500 7.200 7.200 10.500 11.500 8 13.500 4.800 9 2.500 12.500Z" fill="#fff" stroke="#2a6bb0" stroke-width="1.150" stroke-linejoin="round"/></g></svg>
<svg class="i" style="left:189px;top:87px" width="24" height="24" viewBox="0 0 24 24"><path d="M14.1497 17.6497L20.9497 24.4497" fill="none" stroke="#3b4547" stroke-width="3.200" stroke-linecap="round"/><circle cx="8" cy="11.5" r="7" fill="#cfe6fd" stroke="#2a6bb0" stroke-width="1.600"/><rect x="10.5" y="0.8" width="13" height="13" fill="#fff" rx="1" stroke="#3b4547" stroke-width="1.400"/><path d="M12.7 5.3h8.6 M12.7 10.3h8.6" fill="none" stroke="#3b4547" stroke-width="1"/><rect x="17.5" y="3.3" width="2.2" height="4" fill="#fff" stroke="#3b4547" stroke-width="1"/><rect x="14.3" y="8.3" width="2.2" height="4" fill="#fff" stroke="#3b4547" stroke-width="1"/></svg>
<svg class="i" style="left:222px;top:87px" width="24" height="24" viewBox="0 0 24 24"><path d="M16.4983 16.4983L22.7983 22.7983" fill="none" stroke="#3b4547" stroke-width="3.200" stroke-linecap="round"/><circle cx="9.5" cy="9.5" r="8.2" fill="#fff" stroke="#2a6bb0" stroke-width="1.600"/><path d="M5 9.500h9M9.500 5v9" fill="none" stroke="#2a6bb0" stroke-width="2.200"/></svg>
<svg class="i" style="left:255px;top:87px" width="24" height="24" viewBox="0 0 24 24"><path d="M16.4983 16.4983L22.7983 22.7983" fill="none" stroke="#3b4547" stroke-width="3.200" stroke-linecap="round"/><circle cx="9.5" cy="9.5" r="8.2" fill="#fff" stroke="#2a6bb0" stroke-width="1.600"/><path d="M5 9.500h9" fill="none" stroke="#2a6bb0" stroke-width="2.200"/></svg>
<svg class="i" style="left:288px;top:87px" width="24" height="24" viewBox="0 0 24 24"><path d="M8.500 23.500C6.500 21 4.500 17.500 2.500 15c-.8-1.200.8-2.600 2.200-1.500L7.500 16V5.500c0-1.700 2.500-1.700 2.500 0V3.500c0-1.700 2.600-1.700 2.600 0V5c0-1.700 2.600-1.700 2.600 0v2.500c0-1.600 2.500-1.600 2.500 0V17c0 3-1 5-2 6.500z" fill="#fff" stroke="#3b4547" stroke-width="1.300" stroke-linejoin="round"/><path d="M10 5.500V12M12.600 5V12M15.200 7V12" fill="none" stroke="#3b4547" stroke-width="1.100"/></svg>
<svg class="i" style="left:321px;top:87px" width="24" height="24" viewBox="0 0 24 24"><path d="M16.4983 16.4983L22.7983 22.7983" fill="none" stroke="#3b4547" stroke-width="3.200" stroke-linecap="round"/><circle cx="9.5" cy="9.5" r="8.2" fill="#fff" stroke="#2a6bb0" stroke-width="1.600"/><rect x="5.5" y="5.5" width="8" height="8" fill="#cfe6fd" stroke="#2a6bb0" stroke-width="1.200" stroke-dasharray="2.600 1.600"/></svg>
<svg class="i" style="left:361px;top:87px" width="24" height="24" viewBox="0 0 24 24"><rect x="1.5" y="2" width="9" height="9" fill="#cfe6fd" stroke="#2a6bb0" stroke-width="1" stroke-dasharray="2.600 1.600"/><rect x="1.5" y="13.5" width="9" height="9" fill="#cfe6fd" stroke="#2a6bb0" stroke-width="1" stroke-dasharray="2.600 1.600"/><rect x="13" y="13.5" width="9" height="9" fill="#cfe6fd" stroke="#2a6bb0" stroke-width="1" stroke-dasharray="2.600 1.600"/><path d="M13 1l8.500 8M21.500 1l-8.500 8" fill="none" stroke="#d6442a" stroke-width="2.200"/></svg>
<svg class="i" style="left:394px;top:87px" width="24" height="24" viewBox="0 0 24 24"><rect x="1.5" y="2" width="9" height="9" fill="#cfe6fd" stroke="#2a6bb0" stroke-width="1" stroke-dasharray="2.600 1.600"/><rect x="13" y="2" width="9" height="9" fill="#fff" stroke="#b9b9b9" stroke-width="1" stroke-dasharray="2.600 1.600"/><rect x="1.5" y="13.5" width="9" height="9" fill="#fff" stroke="#b9b9b9" stroke-width="1" stroke-dasharray="2.600 1.600"/><rect x="13" y="13.5" width="9" height="9" fill="#cfe6fd" stroke="#2a6bb0" stroke-width="1" stroke-dasharray="2.600 1.600"/></svg>
<svg class="i" style="left:427px;top:87px" width="24" height="24" viewBox="0 0 24 24"><rect x="1.5" y="2" width="9" height="9" fill="#cfe6fd" stroke="#2a6bb0" stroke-width="1" stroke-dasharray="2.600 1.600"/><rect x="13" y="2" width="9" height="9" fill="#cfe6fd" stroke="#2a6bb0" stroke-width="1" stroke-dasharray="2.600 1.600"/><rect x="1.5" y="13.5" width="9" height="9" fill="#cfe6fd" stroke="#2a6bb0" stroke-width="1" stroke-dasharray="2.600 1.600"/><rect x="13" y="13.5" width="9" height="9" fill="#cfe6fd" stroke="#2a6bb0" stroke-width="1" stroke-dasharray="2.600 1.600"/></svg>
<svg class="i" style="left:460px;top:87px" width="24" height="24" viewBox="0 0 24 24"><circle cx="9.5" cy="9.5" r="8.7" fill="#5fa7ef" stroke="#2a6bb0" stroke-width="1.200"/><text x="6.3" y="15" font-family="Liberation Serif,serif" font-size="15" font-weight="bold" fill="#fff">i</text><g transform="translate(10.5 10) scale(1)"><path d="M0 0L12 5.500 7.200 7.200 10.500 11.500 8 13.500 4.800 9 2.500 12.500Z" fill="#fff" stroke="#2a6bb0" stroke-width="1.150" stroke-linejoin="round"/></g></svg>
<svg class="i" style="left:493px;top:87px" width="24" height="24" viewBox="0 0 24 24"><g transform="translate(12 12) rotate(-38)"><path d="M-10.500-4.500H6l4.500 4.500L6 4.500h-16.500z" fill="#fff" stroke="#555" stroke-width="1.400" stroke-linejoin="round"/><circle cx="6" cy="0" r="1.4" fill="none" stroke="#555" stroke-width="1"/><rect x="-8" y="-2.5" width="9.5" height="5" fill="#5fa7ef" stroke="#2a6bb0" stroke-width=".8"/><path d="M-6-1h5.500M-6 1h5.500" fill="none" stroke="#cfe6fd" stroke-width=".8"/></g></svg>
<svg class="i" style="left:526px;top:87px" width="24" height="24" viewBox="0 0 24 24"><path d="M10 23.500C8 21.500 6 18.500 4.500 16.500c-.8-1.200.8-2.400 2-1.500L9 17V7c0-1.800 2.600-1.800 2.600 0v6c.8-1.200 2.600-1 2.700.5.900-1 2.600-.6 2.600.8.900-.8 2.500-.3 2.500 1V19c0 2-.8 3.500-1.500 4.500z" fill="#fff" stroke="#3b4547" stroke-width="1.300" stroke-linejoin="round"/><path d="M6 1.500l1.200 2M10.300.5v2.300M14.500 1.500l-1.200 2M3.500 5h2.300M15 5h2.300M5.500 8.500l1.500-1" fill="none" stroke="#2a6bb0" stroke-width="1.100"/></svg>
<svg class="i" style="left:559px;top:87px" width="24" height="24" viewBox="0 0 24 24"><g transform="translate(12 12) rotate(-42)"><rect x="-12.5" y="-2.8" width="25" height="5.6" fill="#fff" stroke="#8a8a8a" stroke-width="1.300"/><path d="M-9-2.800v2.500M-6-2.800v1.800M-3-2.800v2.500M0-2.800v1.800M3-2.800v2.500M6-2.800v1.800M9-2.800v2.500" fill="none" stroke="#aaa" stroke-width=".9"/></g></svg>
<svg class="i" style="left:608px;top:87px" width="24" height="24" viewBox="0 0 24 24"><rect x="6.5" y="6.5" width="12" height="12" fill="#ededed" stroke="#9e9e9e" stroke-width="1.200"/><rect x="1.5" y="1.5" width="9.5" height="9.5" fill="#fff" stroke="#9e9e9e" stroke-width="1.200"/><rect x="14" y="14" width="9" height="9" fill="#fff" stroke="#9e9e9e" stroke-width="1.200"/></svg>
<svg class="i" style="left:641px;top:87px" width="24" height="24" viewBox="0 0 24 24"><rect x="1.5" y="10.5" width="12.5" height="12.5" fill="#ededed" stroke="#9e9e9e" stroke-width="1.200"/><rect x="8" y="1.5" width="15" height="15.5" fill="#fff" stroke="#9e9e9e" stroke-width="1.200"/></svg>
<svg class="i" style="left:674px;top:87px" width="24" height="24" viewBox="0 0 24 24"><rect x="1.5" y="1.5" width="11" height="11" fill="#fff" stroke="#9e9e9e" stroke-width="1.200"/><rect x="12" y="12" width="10.5" height="10.5" fill="#fff" stroke="#9e9e9e" stroke-width="1.200"/><rect x="5.5" y="5.5" width="14" height="14" fill="#ededed" stroke="#9e9e9e" stroke-width="1.200"/></svg>
<svg class="i" style="left:707px;top:87px" width="24" height="24" viewBox="0 0 24 24"><rect x="1.5" y="11" width="13.5" height="12" fill="#fff" stroke="#9e9e9e" stroke-width="1.200"/><rect x="9" y="1.5" width="14.5" height="15" fill="#ededed" stroke="#9e9e9e" stroke-width="1.200"/></svg>
<svg class="i" style="left:755px;top:87px" width="24" height="24" viewBox="0 0 24 24"><rect x="2" y="2.5" width="20" height="19.5" fill="#fff"/><path d="M7 2.5v19.5M2 7.375h20M12 2.5v19.5M2 12.25h20M17 2.5v19.5M2 17.125h20" fill="none" stroke="#cccccc" stroke-width="1"/><rect x="2" y="2.5" width="20" height="19.5" fill="none" stroke="#b0b0b0" stroke-width="1.200"/></svg>
<svg class="i" style="left:788px;top:87px" width="24" height="24" viewBox="0 0 24 24"><rect x="1.5" y="1.5" width="19.5" height="19.5" fill="#fff"/><path d="M6.375 1.5v19.5M1.5 6.375h19.5M11.25 1.5v19.5M1.5 11.25h19.5M16.125 1.5v19.5M1.5 16.125h19.5" fill="none" stroke="#cccccc" stroke-width="1"/><rect x="1.5" y="1.5" width="19.5" height="19.5" fill="none" stroke="#b0b0b0" stroke-width="1.200"/><g transform="translate(16.500 17.500) rotate(-40) scale(.9)"><path d="M-5.500-6v7.500a5.500 5.500 0 0 0 11 0V-6h-3.600v7.500a1.900 1.900 0 0 1-3.800 0V-6z" fill="#b2b2b2" stroke="#9a9a9a" stroke-width=".8"/></g></svg>
<svg class="i" style="left:821px;top:87px" width="24" height="24" viewBox="0 0 24 24"><path d="M1 4h22M4 1v22" fill="none" stroke="#8f8f8f" stroke-width="1.100" stroke-dasharray="3.500 2"/><g transform="translate(15.500 16) rotate(-40) scale(1.05)"><path d="M-5.500-6v7.500a5.500 5.500 0 0 0 11 0V-6h-3.600v7.500a1.900 1.900 0 0 1-3.800 0V-6z" fill="#b2b2b2" stroke="#9a9a9a" stroke-width=".8"/></g></svg>
<svg class="i" style="left:854px;top:87px" width="24" height="24" viewBox="0 0 24 24"><rect x="1.5" y="1.5" width="19.5" height="19.5" fill="#fff"/><path d="M6.375 1.5v19.5M1.5 6.375h19.5M11.25 1.5v19.5M1.5 11.25h19.5M16.125 1.5v19.5M1.5 16.125h19.5" fill="none" stroke="#dcdcdc" stroke-width="1"/><rect x="1.5" y="1.5" width="19.5" height="19.5" fill="none" stroke="#c6c6c6" stroke-width="1.200"/><path d="M1.500 8h19.500M6.500 1.500v19.500" fill="none" stroke="#8f8f8f" stroke-width="1.100" stroke-dasharray="3.500 2"/><path d="M14.500 19.500h10M19.500 14.500v10" fill="none" stroke="#a2a2a2" stroke-width="2.600"/></svg>
<svg class="i" style="left:887px;top:87px" width="24" height="24" viewBox="0 0 24 24"><rect x="1.5" y="4" width="19.5" height="19.5" fill="#fff"/><path d="M6.375 4v19.5M1.5 8.875h19.5M11.25 4v19.5M1.5 13.75h19.5M16.125 4v19.5M1.5 18.625h19.5" fill="none" stroke="#dcdcdc" stroke-width="1"/><rect x="1.5" y="4" width="19.5" height="19.5" fill="none" stroke="#c6c6c6" stroke-width="1.200"/><path d="M1.500 11h19.500M1.500 16h19.500M7 4v19.500M12 4v19.500" fill="none" stroke="#8f8f8f" stroke-width="1.100" stroke-dasharray="3.500 2"/><path d="M14.500 1l9.500 8M23 .5l-8 9.500" fill="none" stroke="#9a9a9a" stroke-width="2"/></svg>
<svg class="i" style="left:920px;top:87px" width="24" height="24" viewBox="0 0 24 24"><path d="M3 1.500v21" fill="none" stroke="#acacac" stroke-width="1.300"/><rect x="5.5" y="4.5" width="10.5" height="5.5" fill="#ededed" stroke="#acacac" stroke-width="1.150"/><rect x="5.5" y="13.5" width="16.5" height="5.5" fill="#ededed" stroke="#acacac" stroke-width="1.150"/></svg>
<svg class="i" style="left:953px;top:87px" width="24" height="24" viewBox="0 0 24 24"><path d="M21 1.500v21" fill="none" stroke="#acacac" stroke-width="1.300"/><rect x="8" y="4.5" width="10.5" height="5.5" fill="#ededed" stroke="#acacac" stroke-width="1.150"/><rect x="2" y="13.5" width="16.5" height="5.5" fill="#ededed" stroke="#acacac" stroke-width="1.150"/></svg>
<svg class="i" style="left:986px;top:87px" width="24" height="24" viewBox="0 0 24 24"><rect x="6.5" y="4.5" width="11.5" height="5.5" fill="#ededed" stroke="#acacac" stroke-width="1.150"/><rect x="3" y="13.5" width="18" height="5.5" fill="#ededed" stroke="#acacac" stroke-width="1.150"/><path d="M12 1.500v21" fill="none" stroke="#acacac" stroke-width="1.300"/></svg>
<svg class="i" style="left:1019px;top:87px" width="24" height="24" viewBox="0 0 24 24"><rect x="4.5" y="3" width="5.5" height="18" fill="#ededed" stroke="#acacac" stroke-width="1.150"/><rect x="13.5" y="6" width="5.5" height="11.5" fill="#ededed" stroke="#acacac" stroke-width="1.150"/><path d="M1 11.500h22" fill="none" stroke="#acacac" stroke-width="1.300"/></svg>
<svg class="i" style="left:1052px;top:87px" width="24" height="24" viewBox="0 0 24 24"><path d="M1.500 2.500h21" fill="none" stroke="#acacac" stroke-width="1.300"/><rect x="5" y="5" width="5.5" height="16.5" fill="#ededed" stroke="#acacac" stroke-width="1.150"/><rect x="14" y="5" width="5.5" height="10" fill="#ededed" stroke="#acacac" stroke-width="1.150"/></svg>
<svg class="i" style="left:1085px;top:87px" width="24" height="24" viewBox="0 0 24 24"><path d="M1.500 21.500h21" fill="none" stroke="#acacac" stroke-width="1.300"/><rect x="5" y="2.5" width="5.5" height="16.5" fill="#ededed" stroke="#acacac" stroke-width="1.150"/><rect x="14" y="8.5" width="5.5" height="10.5" fill="#ededed" stroke="#acacac" stroke-width="1.150"/></svg>
<svg class="i" style="left:1118px;top:87px" width="24" height="24" viewBox="0 0 24 24"><path d="M4 14.500h16" fill="none" stroke="#acacac" stroke-width="1.300"/><rect x="1.5" y="6" width="5" height="16" fill="#ededed" stroke="#acacac" stroke-width="1.150"/><rect x="10" y="2.5" width="5" height="16.5" fill="#ededed" stroke="#acacac" stroke-width="1.150"/><rect x="18.5" y="9" width="5" height="10.5" fill="#ededed" stroke="#acacac" stroke-width="1.150"/></svg>
<svg class="i" style="left:1151px;top:87px" width="24" height="24" viewBox="0 0 24 24"><path d="M12.500 4v17" fill="none" stroke="#acacac" stroke-width="1.300"/><rect x="7" y="1.5" width="11" height="4.5" fill="#ededed" stroke="#acacac" stroke-width="1.150"/><rect x="1.5" y="10" width="16.5" height="4.5" fill="#ededed" stroke="#acacac" stroke-width="1.150"/><rect x="4.5" y="18.5" width="16.5" height="4.5" fill="#ededed" stroke="#acacac" stroke-width="1.150"/></svg>
<svg class="i" style="left:1201px;top:87px" width="24" height="24" viewBox="0 0 24 24"><rect x="1" y="1" width="20.5" height="19" fill="#fff"/><rect x="1" y="1" width="20.5" height="4.5" fill="#5fa7ef"/><path d="M1 10.3333h20.5M1 15.1667h20.5M7.83333 1v19M14.6667 1v19" fill="none" stroke="#b5b5b5" stroke-width="1"/><rect x="1" y="1" width="20.5" height="19" fill="none" stroke="#3b4547" stroke-width="1.300"/><rect x="10.5" y="10" width="13" height="13.5" fill="#fff" rx="1" stroke="#3b4547" stroke-width="1.400"/><path d="M12.7 14.5h8.6 M12.7 19.5h8.6" fill="none" stroke="#3b4547" stroke-width="1"/><rect x="17.5" y="12.5" width="2.2" height="4" fill="#fff" stroke="#3b4547" stroke-width="1"/><rect x="14.3" y="17.5" width="2.2" height="4" fill="#fff" stroke="#3b4547" stroke-width="1"/></svg>
<svg class="i" style="left:1234px;top:87px" width="24" height="24" viewBox="0 0 24 24"><path d="M1.500 4.500v13c0 1.900 3.400 3.400 7.500 3.400s7.500-1.500 7.500-3.400v-13z" fill="#e3e3e3" stroke="#bdbdbd" stroke-width="1"/><ellipse cx="9" cy="4.5" rx="7.5" ry="3" fill="#f6f6f6" stroke="#bdbdbd" stroke-width="1"/><path d="M1.500 9c0 1.900 3.400 3.400 7.500 3.400s7.500-1.500 7.500-3.400M1.500 13.500c0 1.900 3.400 3.400 7.500 3.400s7.500-1.500 7.500-3.400" fill="none" stroke="#c4c4c4" stroke-width="1"/><path d="M12.97 14.70A4.6 4.6 0 0 1 21.48 13.20M22.03 16.30A4.6 4.6 0 0 1 13.52 17.80" fill="none" stroke="#b0b0b0" stroke-width="2.400"/><path d="M23.28 16.32L18.68 14.82 24.29 11.58ZM11.72 14.68L16.32 16.18 10.71 19.42Z" fill="#b0b0b0"/></svg>
<svg class="i" style="left:1274px;top:87px" width="24" height="24" viewBox="0 0 24 24"><rect x="1.5" y="1.5" width="20.5" height="19" fill="#fff" stroke="#b5b5b5" stroke-width="1.200"/><rect x="1.5" y="1.5" width="20.5" height="4" fill="#b9b9b9"/><path d="M4 10h6M4 13h4M4 17h5" fill="none" stroke="#cfcfcf" stroke-width="1.400"/><path d="M20.8012 19.8012L25.1012 24.1012" fill="none" stroke="#8a8a8a" stroke-width="3.200" stroke-linecap="round"/><circle cx="15.5" cy="14.5" r="5.8" fill="#f2f2f2" stroke="#a6a6a6" stroke-width="1.600"/><rect x="12.5" y="12.5" width="6" height="4" fill="#c6c6c6"/></svg>
<svg class="i" style="left:1314px;top:87px" width="24" height="24" viewBox="0 0 24 24"><rect x="1.5" y="1.5" width="15" height="14.5" fill="#fff"/><path d="M6.5 1.5v14.5M1.5 6.33333h15M11.5 1.5v14.5M1.5 11.1667h15" fill="none" stroke="#cfcfcf" stroke-width="1"/><rect x="1.5" y="1.5" width="15" height="14.5" fill="none" stroke="#ababab" stroke-width="1.200"/><rect x="10" y="18" width="14" height="4.5" fill="#b9b9b9" stroke="#a6a6a6" stroke-width="1"/><path d="M8 20.200H3.500M5.500 18l-2.500 2.200 2.500 2.200" fill="none" stroke="#a2a2a2" stroke-width="1.400"/></svg>
<svg class="i" style="left:1347px;top:87px" width="24" height="24" viewBox="0 0 24 24"><rect x="1.5" y="1.5" width="15" height="9" fill="#fff" stroke="#ababab" stroke-width="1.200"/><path d="M1.500 6h15M9 1.500v9" fill="none" stroke="#cfcfcf" stroke-width="1"/><rect x="5.5" y="13" width="9" height="4.5" fill="#e3e3e3" stroke="#b5b5b5" stroke-width="1"/><rect x="1.5" y="19.5" width="15" height="4" fill="#fff" stroke="#ababab" stroke-width="1.200"/><path d="M9 19.500v4" fill="none" stroke="#cfcfcf" stroke-width="1"/><path d="M14 8l10 7.500M24 8.500l-10 7" fill="none" stroke="#ababab" stroke-width="1.800"/><circle cx="14.5" cy="8" r="1.3" fill="none" stroke="#ababab" stroke-width="1"/></svg>
<svg class="i" style="left:1387px;top:87px" width="24" height="24" viewBox="0 0 24 24"><rect x="1" y="1" width="14.5" height="14" fill="#fff"/><rect x="1" y="1" width="14.5" height="3" fill="#5fa7ef"/><path d="M1 7.66667h14.5M1 11.3333h14.5M5.83333 1v14M10.6667 1v14" fill="none" stroke="#b5b5b5" stroke-width="1"/><rect x="1" y="1" width="14.5" height="14" fill="none" stroke="#3b4547" stroke-width="1.300"/><g transform="translate(17 7) scale(0.9975)"><path d="M0 12C-2.500 8-5 6-5 3.300-5 .5-2.800-1.500 0-1.500S5 .5 5 3.300C5 6 2.500 8 0 12z" fill="#8fc21f" stroke="#5e9413" stroke-width="1"/><rect x="-1.6" y="1.5" width="3.2" height="3.2" fill="#fff" stroke="#5e9413" stroke-width=".7"/></g><g transform="translate(11 10) scale(1.05)"><path d="M0 12C-2.500 8-5 6-5 3.300-5 .5-2.800-1.500 0-1.500S5 .5 5 3.300C5 6 2.500 8 0 12z" fill="#8fc21f" stroke="#5e9413" stroke-width="1"/><rect x="-1.6" y="1.5" width="3.2" height="3.2" fill="#fff" stroke="#5e9413" stroke-width=".7"/></g></svg>
<svg class="i" style="left:1420px;top:87px" width="24" height="24" viewBox="0 0 24 24"><path d="M2 5l2.500-3h8l2.500 3h3v10h-16.500v-10z" fill="#5c6066" stroke="#4a4e54" stroke-width="1"/><circle cx="9" cy="8.5" r="4.8" fill="#6fb0f0" stroke="#2a6bb0" stroke-width="1.300"/><circle cx="8" cy="7.5" r="1.8" fill="#cfe6fd"/><g transform="translate(17 7) scale(0.9975)"><path d="M0 12C-2.500 8-5 6-5 3.300-5 .5-2.800-1.500 0-1.500S5 .5 5 3.300C5 6 2.500 8 0 12z" fill="#8fc21f" stroke="#5e9413" stroke-width="1"/><rect x="-1.6" y="1.5" width="3.2" height="3.2" fill="#fff" stroke="#5e9413" stroke-width=".7"/></g><g transform="translate(11 10) scale(1.05)"><path d="M0 12C-2.500 8-5 6-5 3.300-5 .5-2.800-1.500 0-1.500S5 .5 5 3.300C5 6 2.500 8 0 12z" fill="#8fc21f" stroke="#5e9413" stroke-width="1"/><rect x="-1.6" y="1.5" width="3.2" height="3.2" fill="#fff" stroke="#5e9413" stroke-width=".7"/></g></svg>
<svg class="i" style="left:1460px;top:87px" width="24" height="24" viewBox="0 0 24 24"><path d="M2 2.500h15l4.500 4.500v13.500H2z" fill="#fff" stroke="#3b4547" stroke-width="1.400" stroke-linejoin="round"/><path d="M17 2.500v4.500h4.500" fill="none" stroke="#9a9a9a" stroke-width="1"/><text x="3.6" y="17.2" font-family="Liberation Sans,sans-serif" font-size="8.6" fill="#2b2b2b" textLength="16.500" lengthAdjust="spacingAndGlyphs">SQL</text></svg>
<svg class="i" style="left:1493px;top:87px" width="24" height="24" viewBox="0 0 24 24"><rect x="1" y="1" width="21" height="19.5" fill="#fff"/><rect x="1" y="1" width="21" height="4.5" fill="#5fa7ef"/><path d="M1 10.5h21M1 15.5h21M8 1v19.5M15 1v19.5" fill="none" stroke="#b5b5b5" stroke-width="1"/><rect x="1" y="1" width="21" height="19.5" fill="none" stroke="#3b4547" stroke-width="1.300"/><path d="M20.0841 19.0841L23.3841 22.3841" fill="none" stroke="#3b4547" stroke-width="3.200" stroke-linecap="round"/><circle cx="14.5" cy="13.5" r="6.2" fill="#fff" stroke="#2a6bb0" stroke-width="1.600"/></svg>
<svg class="i" style="left:1526px;top:87px" width="24" height="24" viewBox="0 0 24 24"><rect x="2" y="2" width="20.5" height="19.5" fill="#fff"/><rect x="2" y="2" width="20.5" height="3.5" fill="#5fa7ef"/><path d="M2 10.8333h20.5M2 16.1667h20.5M12.25 2v19.5" fill="none" stroke="#b5b5b5" stroke-width="1"/><rect x="2" y="2" width="20.5" height="19.5" fill="none" stroke="#3b4547" stroke-width="1.300"/><rect x="13.5" y="5.5" width="9" height="16" fill="#fff" stroke="#f0682b" stroke-width="1.400"/><path d="M13.500 10.500h9M13.500 16h9" fill="none" stroke="#f0682b" stroke-width="1.300"/><g transform="translate(-.5 9) rotate(4) scale(.95)"><path d="M0 0C1.500 2.800 4 4.200 7 4.200V1L14 6 7 11V7.800C3 7.800 .5 4.500 0 0Z" fill="#7fb51c" stroke="#5e9413" stroke-width=".600" stroke-linejoin="round"/></g></svg>
<svg class="i" style="left:1566px;top:87px" width="24" height="24" viewBox="0 0 24 24"><rect x="3.5" y="3.5" width="18" height="17.5" fill="#efefef" stroke="#9c9c9c" stroke-width="1.300"/><path d="M5.500 19l4.500-6 3 3.500 3-5 4.500 7.500z" fill="#b0b0b0"/><circle cx="9" cy="8" r="1.8" fill="#fff"/><rect x="1" y="1" width="4.5" height="4.5" fill="#b9b9b9" stroke="#8f8f8f" stroke-width="1"/><rect x="20" y="1" width="4.5" height="4.5" fill="#b9b9b9" stroke="#8f8f8f" stroke-width="1"/><rect x="1" y="19.5" width="4.5" height="4.5" fill="#b9b9b9" stroke="#8f8f8f" stroke-width="1"/></svg>
<svg class="i" style="left:1606px;top:87px" width="24" height="24" viewBox="0 0 24 24"><rect x="1" y="1" width="18.5" height="15.5" fill="#fff"/><rect x="1" y="1" width="18.5" height="3.5" fill="#5fa7ef"/><path d="M1 8.5h18.5M1 12.5h18.5M7.16667 1v15.5M13.3333 1v15.5" fill="none" stroke="#cfcfcf" stroke-width="1"/><rect x="1" y="1" width="18.5" height="15.5" fill="none" stroke="#9c9c9c" stroke-width="1.300"/><g transform="translate(6 8.500) scale(.72)"><path d="M2.500 10L12.500 2.500 15.500 8.500 22 9.500 19 22H6Z" fill="#cfe6fd" stroke="#2a6bb0" stroke-width="1.800" stroke-linejoin="round"/></g></svg>
<svg class="i" style="left:1639px;top:87px" width="24" height="24" viewBox="0 0 24 24"><g transform="translate(0 0) scale(.8)"><path d="M2.500 10L12.500 2.500 15.500 8.500 22 9.500 19 22H6Z" fill="#cfe6fd" stroke="#8db6e0" stroke-width="1.500" stroke-linejoin="round"/></g><rect x="9.5" y="9.5" width="14" height="14" fill="#fff"/><rect x="9.5" y="9.5" width="14" height="3.5" fill="#5fa7ef"/><path d="M9.5 16.5h14M9.5 20h14M14.1667 9.5v14M18.8333 9.5v14" fill="none" stroke="#b5b5b5" stroke-width="1"/><rect x="9.5" y="9.5" width="14" height="14" fill="none" stroke="#3b4547" stroke-width="1.300"/></svg>
<svg class="i" style="left:17px;top:126px" width="24" height="24" viewBox="0 0 24 24"><path d="M9 19.500c2-1.500 2.800-3.500 2.300-5.500h4.400c-.5 2 .3 4 2.300 5.500z" fill="#bfbcb8" stroke="#5a6062" stroke-width="1.100"/><circle cx="13.5" cy="10" r="3.7" fill="#d0c9c6" stroke="#5a6062" stroke-width="1.200"/><rect x="5" y="18.5" width="17" height="4" fill="#cfcac7" rx="1.5" stroke="#5a6062" stroke-width="1.100"/><path d="M5.500 23h16" fill="none" stroke="#2a6bb0" stroke-width="1.600"/><path d="M1.5 9.5L5.61594 5.38406" fill="none" stroke="#2a6bb0" stroke-width="2.6"/><path d="M10 1L8.33406 8.10218 2.89782 2.66594Z" fill="#2a6bb0"/></svg>
<svg class="i" style="left:50px;top:126px" width="24" height="24" viewBox="0 0 24 24"><path d="M9 19.500c2-1.500 2.800-3.500 2.300-5.500h4.400c-.5 2 .3 4 2.300 5.500z" fill="#bfbcb8" stroke="#5a6062" stroke-width="1.100"/><circle cx="13.5" cy="10" r="3.7" fill="#d0c9c6" stroke="#5a6062" stroke-width="1.200"/><rect x="5" y="18.5" width="17" height="4" fill="#cfcac7" rx="1.5" stroke="#5a6062" stroke-width="1.100"/><path d="M5.500 23h16" fill="none" stroke="#2a6bb0" stroke-width="1.600"/><path d="M10 1L5.88406 5.11594" fill="none" stroke="#d6442a" stroke-width="2.6"/><path d="M1.5 9.5L3.16594 2.39782 8.60218 7.83406Z" fill="#d6442a"/></svg>
<svg class="i" style="left:90px;top:126px" width="24" height="24" viewBox="0 0 24 24"><g transform="translate(13.500 12.500) rotate(42) scale(1.12)"><path d="M-3-1.500c-1-3.500 0-7 1.500-9 .8-1 2.200-1 3 0 1.500 2 2.500 5.500 1.500 9z" fill="#5fa7ef" stroke="#2a6bb0" stroke-width="1"/><circle cx="0" cy="-8" r="0.9" fill="#222"/><rect x="-4.5" y="-1.5" width="9" height="3" fill="#5fa7ef" stroke="#2a6bb0" stroke-width="1"/><path d="M-4.500 1.500h9l1 8h-11z" fill="#f7b62e" stroke="#c98a14" stroke-width="1"/><path d="M-2.500 4v5.500M0 4v5.500M2.500 4v5.500" fill="none" stroke="#c98a14" stroke-width=".9"/></g><path d="M1.5 8.5L4.25752 5.53036" fill="none" stroke="#2a6bb0" stroke-width="2.4"/><path d="M8 1.5L6.75634 7.8507 1.75869 3.21003Z" fill="#2a6bb0"/></svg>
<svg class="i" style="left:123px;top:126px" width="24" height="24" viewBox="0 0 24 24"><g transform="translate(13.500 12.500) rotate(42) scale(1.12)"><path d="M-3-1.500c-1-3.500 0-7 1.500-9 .8-1 2.200-1 3 0 1.500 2 2.500 5.500 1.500 9z" fill="#bdbdbd" stroke="#9c9c9c" stroke-width="1"/><circle cx="0" cy="-8" r="0.9" fill="#888"/><rect x="-4.5" y="-1.5" width="9" height="3" fill="#bdbdbd" stroke="#9c9c9c" stroke-width="1"/><path d="M-4.500 1.500h9l1 8h-11z" fill="#c9c9c9" stroke="#a6a6a6" stroke-width="1"/><path d="M-2.500 4v5.500M0 4v5.500M2.500 4v5.500" fill="none" stroke="#a6a6a6" stroke-width=".9"/></g><path d="M8 1.5L5.24248 4.46964" fill="none" stroke="#a6a6a6" stroke-width="2.4"/><path d="M1.5 8.5L2.74366 2.1493 7.74131 6.78997Z" fill="#a6a6a6"/></svg>
<svg class="i" style="left:156px;top:126px" width="24" height="24" viewBox="0 0 24 24"><rect x="1.5" y="1.5" width="21" height="20.5" fill="#cfe6fd" stroke="#2a6bb0" stroke-width="1.200" stroke-dasharray="3 1.800"/><g transform="translate(13.500 12.500) rotate(42) scale(1.12)"><path d="M-3-1.500c-1-3.500 0-7 1.500-9 .8-1 2.200-1 3 0 1.500 2 2.500 5.500 1.500 9z" fill="#5fa7ef" stroke="#2a6bb0" stroke-width="1"/><circle cx="0" cy="-8" r="0.9" fill="#222"/><rect x="-4.5" y="-1.5" width="9" height="3" fill="#5fa7ef" stroke="#2a6bb0" stroke-width="1"/><path d="M-4.500 1.500h9l1 8h-11z" fill="#f7b62e" stroke="#c98a14" stroke-width="1"/><path d="M-2.500 4v5.500M0 4v5.500M2.500 4v5.500" fill="none" stroke="#c98a14" stroke-width=".9"/></g></svg>
<svg class="i" style="left:189px;top:126px" width="24" height="24" viewBox="0 0 24 24"><path d="M3 22.500V9.500L12 2.500l9 7v13z" fill="#fff" stroke="#2a6bb0" stroke-width="1.200"/><rect x="10.2" y="3.2" width="3.6" height="3.6" fill="#d6442a"/><rect x="3.4" y="8.7" width="3.6" height="3.6" fill="#d6442a"/><rect x="17" y="8.7" width="3.6" height="3.6" fill="#d6442a"/><rect x="3.4" y="18.2" width="3.6" height="3.6" fill="#d6442a"/><rect x="17" y="18.2" width="3.6" height="3.6" fill="#d6442a"/></svg>
<svg class="i" style="left:222px;top:126px" width="24" height="24" viewBox="0 0 24 24"><path d="M2 21V8.500L10.500 2l9.500 7" fill="#fff" stroke="#2a6bb0" stroke-width="1.200"/><path d="M2 21h9" fill="none" stroke="#2a6bb0" stroke-width="1.200"/><rect x="8.7" y="2.7" width="3.6" height="3.6" fill="#d6442a"/><rect x="2.4" y="8.2" width="3.6" height="3.6" fill="#d6442a"/><rect x="2.4" y="17" width="3.6" height="3.6" fill="#d6442a"/><rect x="10.5" y="10" width="13" height="13.5" fill="#fff" rx="1" stroke="#3b4547" stroke-width="1.400"/><path d="M12.7 14.5h8.6 M12.7 19.5h8.6" fill="none" stroke="#3b4547" stroke-width="1"/><rect x="17.5" y="12.5" width="2.2" height="4" fill="#fff" stroke="#3b4547" stroke-width="1"/><rect x="14.3" y="17.5" width="2.2" height="4" fill="#fff" stroke="#3b4547" stroke-width="1"/></svg>
<svg class="i" style="left:255px;top:126px" width="24" height="24" viewBox="0 0 24 24"><path d="M1.500 21.500L8 3.500h3v18z" fill="#5fa7ef" stroke="#2a6bb0" stroke-width="1.200"/><path d="M22.500 21.500L16 3.500h-2.500v18z" fill="#fff" stroke="#6d6d6d" stroke-width="1.200"/></svg>
<svg class="i" style="left:288px;top:126px" width="24" height="24" viewBox="0 0 24 24"><path d="M2.500 2L20.500 8.500v3h-18z" fill="#5fa7ef" stroke="#2a6bb0" stroke-width="1.200"/><path d="M2.500 23L20.500 16.500v-2.500h-18z" fill="#fff" stroke="#6d6d6d" stroke-width="1.200"/></svg>
<svg class="i" style="left:321px;top:126px" width="24" height="24" viewBox="0 0 24 24"><path d="M11 2L5.74264 7.25736" fill="none" stroke="#d6442a" stroke-width="2.6"/><path d="M1.5 11.5L3.1122 4.62692 8.37308 9.8878Z" fill="#d6442a"/><path d="M6 23L24 3.500" fill="none" stroke="#2a6bb0" stroke-width="1.600"/><path d="M23 4.500l-8 1.500 6.500 6.500z" fill="#3b4547"/></svg>
<svg class="i" style="left:354px;top:126px" width="24" height="24" viewBox="0 0 24 24"><text x="0.5" y="22.6" font-family="Liberation Serif,serif" font-size="30" fill="#7dbcfc" stroke="#1f5fa8" stroke-width="1.700" paint-order="stroke" stroke-linejoin="round">T</text><path d="M19 5.500V20" fill="none" stroke="#d6442a" stroke-width="1.800"/><path d="M19 1.500l3.800 5.500h-7.600zM19 24l3.800-5.500h-7.600z" fill="#d6442a"/></svg>
<svg class="i" style="left:387px;top:126px" width="24" height="24" viewBox="0 0 24 24"><rect x="1" y="1" width="22.5" height="22.5" fill="#fff"/><path d="M1 1h6.500l4 9.500-4 13H1z" fill="#9bcc2a"/><path d="M7.500 1h16v11h-12.500z" fill="#f28d6b"/><path d="M11 12h12.500v11.500H7.500z" fill="#fdc62d"/><path d="M7.500 1l4 9.500-4 13M11.300 12h12.200" fill="none" stroke="#3b4547" stroke-width="1.200"/><rect x="1" y="1" width="22.5" height="22.5" fill="none" stroke="#3b4547" stroke-width="1.400"/><rect x="3.5" y="9.5" width="3.6" height="3.6" fill="#3b4547"/><rect x="15.5" y="5" width="3.6" height="3.6" fill="#3b4547"/><rect x="15.5" y="16" width="3.6" height="3.6" fill="#3b4547"/></svg>
<svg class="i" style="left:420px;top:126px" width="24" height="24" viewBox="0 0 24 24"><path d="M3.500 11L13 3l3 6.500 6.500.5-3.500 12.500H6.500z" fill="#fff" stroke="#2a6bb0" stroke-width="1.300" stroke-linejoin="round"/><path d="M3.5 10.5L9.51036 5.15746" fill="none" stroke="#d6442a" stroke-width="1.4"/><path d="M12.5 2.5L11.158 7.01103 7.86274 3.30388Z" fill="#d6442a"/><path d="M5 18l1.500 4.500 2.500-3.500z" fill="#3b4547"/></svg>
<svg class="i" style="left:453px;top:126px" width="24" height="24" viewBox="0 0 24 24"><path d="M2.500 10.500L11.500 3l3.500 7.500 7-.5L19 22.500H6z" fill="#fff" stroke="#2a6bb0" stroke-width="1.300" stroke-linejoin="round"/><rect x="9.5" y="1" width="3.6" height="3.6" fill="#fff" stroke="#d6442a" stroke-width="1.200"/><rect x="13.2" y="8.7" width="3.6" height="3.6" fill="#3b4547"/></svg>
<svg class="i" style="left:486px;top:126px" width="24" height="24" viewBox="0 0 24 24"><path d="M19.500 3L2.500 12l17 7.500" fill="none" stroke="#4e95e0" stroke-width="1.800"/><path d="M13 7.500c2 2.500 2 6.500 0 9" fill="none" stroke="#d6442a" stroke-width="1.300"/><path d="M8 9.500L3.500 12l4.500 2z" fill="#c9c9c9"/></svg>
<svg class="i" style="left:519px;top:126px" width="24" height="24" viewBox="0 0 24 24"><path d="M4 21C-1 12 6 1.500 19.500 6" fill="none" stroke="#2a6bb0" stroke-width="1.500"/><rect x="2.1" y="4.6" width="3.8" height="3.8" fill="#3b4547"/><rect x="18.6" y="4.6" width="3.8" height="3.8" fill="#3b4547"/><rect x="2.6" y="19.6" width="3.8" height="3.8" fill="#3b4547"/></svg>
<svg class="i" style="left:552px;top:126px" width="24" height="24" viewBox="0 0 24 24"><circle cx="12.5" cy="12" r="9.5" fill="#cfe6fd" stroke="#2a6bb0" stroke-width="1.500"/><rect x="14.6" y="1.1" width="3.8" height="3.8" fill="#3b4547"/><rect x="1.6" y="6.1" width="3.8" height="3.8" fill="#3b4547"/><rect x="6.6" y="19.1" width="3.8" height="3.8" fill="#3b4547"/></svg>
<svg class="i" style="left:585px;top:126px" width="24" height="24" viewBox="0 0 24 24"><path d="M1 22h23" fill="none" stroke="#3b4547" stroke-width="2"/><path d="M12 12h8.500v9.500" fill="none" stroke="#d6442a" stroke-width="1.400"/><path d="M11.500 1.500V17" fill="none" stroke="#2a6bb0" stroke-width="2"/><path d="M11.500 21.500l-4.500-5h9z" fill="#d6442a"/></svg>
<svg class="i" style="left:618px;top:126px" width="24" height="24" viewBox="0 0 24 24"><path d="M1 22h23" fill="none" stroke="#3b4547" stroke-width="2"/><path d="M12 12h8.500v9.500" fill="none" stroke="#d6442a" stroke-width="1.400"/><path d="M11.500 6v15.500" fill="none" stroke="#2a6bb0" stroke-width="2"/><path d="M11.500 1l-4.500 5h9z" fill="#d6442a"/></svg>
<svg class="i" style="left:651px;top:126px" width="24" height="24" viewBox="0 0 24 24"><path d="M2.500 22h22" fill="none" stroke="#3b4547" stroke-width="2"/><path d="M14.500 12.500c1.500 2.500 2.500 5.500 2.500 9" fill="none" stroke="#d6442a" stroke-width="1.500"/><path d="M3 21.500L20.500 3" fill="none" stroke="#2a6bb0" stroke-width="2"/><rect x="18.6" y="1.1" width="3.8" height="3.8" fill="#3b4547"/><rect x="1.1" y="19.9" width="3.8" height="3.8" fill="#3b4547"/></svg>
<div class="a" style="left:0px;top:158px;width:301px;height:19px;background:#bfd0ea"></div>
<span class="t" style="left:3.5px;top:161.5px;font-size:14.8px;line-height:14.8px;letter-spacing:0.220px;color:#1e1e1e;font-family:"Liberation Sans",sans-serif;">Управление слоями</span>
<div class="a" style="left:0px;top:215px;width:301px;height:764px;background:#fff;border:1px solid #b4b4b4;border-top-color:#c8c8c8"></div>
<div class="a" style="left:1px;top:216px;width:299px;height:16px;background:#b5e2ff"></div>
<span class="t" style="left:12.0px;top:220.1px;font-size:11px;line-height:11px;letter-spacing:0.770px;font-weight:bold;color:#000;font-family:"Liberation Sans",sans-serif;">Карта: _63_26_0000000_5945</span>
<span class="t" style="left:42.0px;top:236.9px;font-size:11px;line-height:11px;letter-spacing:0.185px;font-weight:bold;color:#000;font-family:"Liberation Sans",sans-serif;">Косметический слой</span>
<span class="t" style="left:42.0px;top:254.9px;font-size:11px;line-height:11px;letter-spacing:-0.144px;color:#8c8c8c;font-family:"Liberation Sans",sans-serif;">_63_26_0000000_5945</span>
<svg class="i" style="left:273px;top:161px" width="28" height="13" viewBox="0 0 28 13"><rect x="1.5" y="1.5" width="10" height="10" fill="none" rx="2.2" stroke="#6b6b6b" stroke-width="1.100"/><rect x="3.8" y="5.5" width="4" height="3.5" fill="none" stroke="#555" stroke-width="1"/><path d="M5.600 5.500V3.800h4v3.500H7.800" fill="none" stroke="#555" stroke-width="1"/><rect x="15.5" y="1.5" width="10" height="10" fill="none" rx="2.2" stroke="#6b6b6b" stroke-width="1.100"/><path d="M18 4l5 5M23 4l-5 5" fill="none" stroke="#4a4a4a" stroke-width="1.900"/></svg>
<svg class="i" style="left:6px;top:190px" width="12" height="15" viewBox="0 0 12 15"><path d="M6 0v10M1.200 7l4.800 6 4.800-6" fill="none" stroke="#a6a6a6" stroke-width="2.900"/></svg>
<svg class="i" style="left:35.5px;top:190px" width="12" height="15" viewBox="0 0 12 15"><path d="M6 14.500v-10M1.200 7.500l4.800-6 4.800 6" fill="none" stroke="#a6a6a6" stroke-width="2.900"/></svg>
<svg class="i" style="left:63px;top:188px" width="19" height="19" viewBox="0 0 19 19"><path d="M1 7L9 1l8 6-8 5.500z" fill="#cfe6fd" stroke="#2a6bb0" stroke-width="1.300" stroke-linejoin="round"/><path d="M1 10l7.500 5.200" fill="none" stroke="#3b4547" stroke-width="1.200"/><path d="M9 14.500h8M13 10.500v8" fill="none" stroke="#6d9d16" stroke-width="2.200"/></svg>
<svg class="i" style="left:93px;top:188px" width="19" height="19" viewBox="0 0 19 19"><path d="M1 7L9 1l8 6-8 5.500z" fill="#f6f6f6" stroke="#b0b0b0" stroke-width="1.200" stroke-linejoin="round"/><path d="M1 9.500l8 5.500 8-5.500M1 12l8 5.500 8-5.500" fill="none" stroke="#b9b9b9" stroke-width="1.100"/><path d="M10 1l7 6M17 .5l-6 7.500" fill="none" stroke="#b0b0b0" stroke-width="1.500"/></svg>
<svg class="i" style="left:1.5px;top:222px" width="8" height="5" viewBox="0 0 8 5"><path d="M.3.5h7L3.800 4.500z" fill="#4d4d4d"/></svg>
<svg class="i" style="left:20px;top:233px" width="17" height="17" viewBox="0 0 17 17"><path d="M1 5.500L7.500 1 15 5.500 7.500 10z" fill="#fdc92e" stroke="#d59a1a" stroke-width="1"/><path d="M1 8l6.500 4.500M1 10.500l6.500 4.500" fill="none" stroke="#5b6263" stroke-width="1"/><rect x="6.5" y="5.5" width="8" height="8.5" fill="#cfe6fd" stroke="#2a6bb0" stroke-width="1.200"/><rect x="5.1" y="4.1" width="2.8" height="2.8" fill="#3b4547"/><rect x="13.1" y="4.1" width="2.8" height="2.8" fill="#3b4547"/><rect x="5.1" y="12.6" width="2.8" height="2.8" fill="#3b4547"/><rect x="13.1" y="12.6" width="2.8" height="2.8" fill="#3b4547"/></svg>
<svg class="i" style="left:20px;top:251px" width="17" height="17" viewBox="0 0 17 17"><path d="M1 5.500L7.500 1 15 5.500 7.500 10z" fill="#fff" stroke="#5b6263" stroke-width="1"/><path d="M1 8l6.500 4.500M1 10.500l6.500 4.500" fill="none" stroke="#5b6263" stroke-width="1"/><rect x="6.5" y="5.5" width="8" height="8.5" fill="#cfe6fd" stroke="#2a6bb0" stroke-width="1.200"/><rect x="5.1" y="4.1" width="2.8" height="2.8" fill="#3b4547"/><rect x="13.1" y="4.1" width="2.8" height="2.8" fill="#3b4547"/><rect x="5.1" y="12.6" width="2.8" height="2.8" fill="#3b4547"/><rect x="13.1" y="12.6" width="2.8" height="2.8" fill="#3b4547"/></svg>
<svg class="i" style="left:222px;top:218px" width="16" height="12" viewBox="0 0 16 12"><path d="M.7 6C3 2.500 5.500 1 8 1s5 1.500 7.300 5C13 9.500 10.500 11 8 11S3 9.500 .7 6z" fill="#fff" stroke="#5b6263" stroke-width="1.200"/><path d="M1.500 4.800C3.500 2 5.800 1.200 8 1.200s4.500.8 6.500 3.600" fill="none" stroke="#5b6263" stroke-width="2"/><circle cx="8" cy="6.3" r="3.6" fill="#3d86dc" stroke="#2a6bb0" stroke-width=".6"/><circle cx="8" cy="6.3" r="1.7" fill="#1d3f73"/><circle cx="7" cy="5.3" r="0.9" fill="#cfe6fd"/></svg>
<svg class="i" style="left:222px;top:235px" width="16" height="12" viewBox="0 0 16 12"><path d="M.7 6C3 2.500 5.500 1 8 1s5 1.500 7.300 5C13 9.500 10.500 11 8 11S3 9.500 .7 6z" fill="#fff" stroke="#5b6263" stroke-width="1.200"/><path d="M1.500 4.800C3.500 2 5.800 1.200 8 1.200s4.500.8 6.500 3.600" fill="none" stroke="#5b6263" stroke-width="2"/><circle cx="8" cy="6.3" r="3.6" fill="#3d86dc" stroke="#2a6bb0" stroke-width=".6"/><circle cx="8" cy="6.3" r="1.7" fill="#1d3f73"/><circle cx="7" cy="5.3" r="0.9" fill="#cfe6fd"/></svg>
<svg class="i" style="left:222px;top:253px" width="16" height="12" viewBox="0 0 16 12"><path d="M.7 6C3 2.500 5.500 1 8 1s5 1.500 7.300 5C13 9.500 10.500 11 8 11S3 9.500 .7 6z" fill="#a9a9a9" stroke="#5b6263" stroke-width="1.300"/></svg>
<svg class="i" style="left:242px;top:216px" width="16" height="16" viewBox="0 0 16 16"><rect x="1.5" y="1.5" width="13" height="13" fill="#d5ebff" stroke="#2a6bb0" stroke-width="1.100" stroke-dasharray="3.200 1.800"/></svg>
<svg class="i" style="left:242px;top:233px" width="16" height="16" viewBox="0 0 16 16"><rect x="1.5" y="1.5" width="13" height="13" fill="#d5ebff" stroke="#2a6bb0" stroke-width="1.100" stroke-dasharray="3.200 1.800"/></svg>
<svg class="i" style="left:242px;top:251px" width="17" height="17" viewBox="0 0 17 17"><rect x="1.5" y="1.5" width="13" height="13" fill="#fff" stroke="#9a9a9a" stroke-width="1" stroke-dasharray="3.200 1.800"/><rect x="8.5" y="9.5" width="7.5" height="6.5" fill="#d9cfc9" stroke="#8b8b8b" stroke-width=".9"/><path d="M10.300 9.500V8a2 2 0 0 1 4 0v1.500" fill="none" stroke="#8b8b8b" stroke-width="1.100"/></svg>
<svg class="i" style="left:262.5px;top:233px" width="16" height="16" viewBox="0 0 16 16"><g transform="translate(.8 14) rotate(-45)"><path d="M3-1.700H15V1.700H3z" fill="#f8b62d" stroke="#cf8a17" stroke-width=".5"/><path d="M3-.5H15" fill="none" stroke="#fcd675" stroke-width=".9"/><path d="M15-1.700h2.200c.5 0 .8.3.8.8v1.800c0 .5-.3.800-.8.800H15z" fill="#d9482a"/><path d="M0 0L3-1.700V1.700z" fill="#e9dcc3" stroke="#8d7a55" stroke-width=".5"/><path d="M0 0l1.200-.7v1.400z" fill="#444"/></g></svg>
<svg class="i" style="left:262.5px;top:251px" width="16" height="16" viewBox="0 0 16 16"><g transform="translate(.8 14) rotate(-45)"><path d="M3-1.700H15V1.700H3z" fill="#d3d3d3" stroke="#b0b0b0" stroke-width=".5"/><path d="M3-.5H15" fill="none" stroke="#e6e6e6" stroke-width=".9"/><path d="M15-1.700h2.200c.5 0 .8.3.8.8v1.800c0 .5-.3.800-.8.800H15z" fill="#bdbdbd"/><path d="M0 0L3-1.700V1.700z" fill="#e6e6e6" stroke="#a9a9a9" stroke-width=".5"/><path d="M0 0l1.200-.7v1.400z" fill="#8d8d8d"/></g></svg>
<svg class="i" style="left:282.5px;top:216px" width="16" height="16" viewBox="0 0 16 16"><g transform="translate(7.800 8) rotate(-38) scale(1.22)"><path d="M-7.500-3.200H4l3.200 3.200L4 3.200H-7.500z" fill="#f4f4f4" stroke="#b9b9b9" stroke-width="1" stroke-linejoin="round"/><circle cx="4.2" cy="0" r="0.8" fill="none" stroke="#b9b9b9" stroke-width=".8"/><rect x="-5.8" y="-1.8" width="6.5" height="3.6" fill="#dedede" stroke="#b9b9b9" stroke-width=".6"/></g></svg>
<svg class="i" style="left:282.5px;top:252px" width="16" height="16" viewBox="0 0 16 16"><g transform="translate(7.800 8) rotate(-38) scale(1.22)"><path d="M-7.500-3.200H4l3.200 3.200L4 3.200H-7.500z" fill="#f4f4f4" stroke="#b9b9b9" stroke-width="1" stroke-linejoin="round"/><circle cx="4.2" cy="0" r="0.8" fill="none" stroke="#b9b9b9" stroke-width=".8"/><rect x="-5.8" y="-1.8" width="6.5" height="3.6" fill="#dedede" stroke="#b9b9b9" stroke-width=".6"/></g></svg>
<div class="a" style="left:0px;top:990px;width:79px;height:23px;background:linear-gradient(#fff,#f4f4f4);border:1px solid #c6c6c6;border-top-color:#e4e4e4;border-radius:0 0 4px 4px;box-shadow:0 1px 1px #ccc"></div>
<span class="t" style="left:13.0px;top:997.0px;font-size:11px;line-height:11px;letter-spacing:0.002px;color:#000;font-family:"Liberation Sans",sans-serif;">Управле...</span>
<div class="a" style="left:79px;top:990px;width:98px;height:21px;background:linear-gradient(#e9e9e9,#dfdfdf);border:1px solid #cfcfcf;border-top-color:#e2e2e2;border-radius:0 0 4px 4px"></div>
<span class="t" style="left:92.5px;top:996.0px;font-size:11px;line-height:11px;letter-spacing:-0.015px;color:#000;font-family:"Liberation Sans",sans-serif;">Условные о...</span>
<div class="a" style="left:177px;top:990px;width:50px;height:21px;background:linear-gradient(#e9e9e9,#dfdfdf);border:1px solid #cfcfcf;border-top-color:#e2e2e2;border-radius:0 0 4px 4px"></div>
<span class="t" style="left:187.0px;top:996.0px;font-size:11px;line-height:11px;letter-spacing:0.110px;color:#000;font-family:"Liberation Sans",sans-serif;">Окна</span>
<div class="a" style="left:227px;top:990px;width:74px;height:21px;background:linear-gradient(#e9e9e9,#dfdfdf);border:1px solid #cfcfcf;border-top-color:#e2e2e2;border-radius:0 0 4px 4px"></div>
<span class="t" style="left:238.0px;top:996.0px;font-size:11px;line-height:11px;letter-spacing:0.509px;color:#000;font-family:"Liberation Sans",sans-serif;">Открыт...</span>
<div class="a" style="left:307px;top:158px;width:1330px;height:842px;background:#b4c7e3"></div>
<div class="a" style="left:1637px;top:157px;width:6px;height:8px;background:#e6e6e6"></div>
<div class="a" style="left:1643px;top:157px;width:277px;height:8px;background:#bfd0ea"></div>
<div class="a" style="left:307px;top:158px;width:1330px;height:770px;background:#fff;border:1px solid #6a6a6a;border-radius:6px 0 0 0"></div>
<div class="a" style="left:308px;top:181px;width:3px;height:746px;background:#ececec"></div>
<div class="a" style="left:308px;top:924px;width:1329px;height:3px;background:#ececec"></div>
<div class="a" style="left:307px;top:158px;width:1330px;height:24px;background:linear-gradient(#55abff,#479ffb 48%,#3393f5 52%,#3090f3);border:1px solid #1f72cf;border-bottom-color:#1b5fae;border-radius:6px 0 0 0"></div>
<span class="t" style="left:936.0px;top:165.9px;font-size:11px;line-height:11px;letter-spacing:0.047px;color:#fff;font-family:"Liberation Sans",sans-serif;text-shadow:1px 1px 0 #1d4a8a">Карта: _63_26_0000000_5945</span>
<svg class="i" style="left:313px;top:162px" width="17" height="16" viewBox="0 0 17 16"><rect x=".5" y=".5" width="15.5" height="15" rx="1.5" fill="#e9e4dc" stroke="#666"/><path d="M2 1.5 L9 1.5 L15 6 V9.5 C10 8 5 5 2 1.5Z" fill="#9fce2b"/><path d="M9 1.5H15V6Z" fill="#6db3f2"/><path d="M2 2.5 C5 7 10 10 15 11 M2 13 L8.5 8" stroke="#fbb830" stroke-width="1.2" fill="none"/></svg>
<div class="a" style="left:311px;top:283px;width:1262px;height:1px;background:repeating-linear-gradient(90deg,#9a9a9a 0 1px,transparent 1px 3px)"></div>
<svg class="i" style="left:311px;top:182px" width="1262" height="742" viewBox="311 182 1262 742" shape-rendering="crispEdges">
<defs><pattern id="dots" x="0" y="4" width="8" height="8" patternUnits="userSpaceOnUse"><rect width="8" height="8" fill="#fff"/><g fill="#fb7d85"><rect x="1" y="0" width="2" height="2"/><rect x="6" y="1" width="2" height="2"/><rect x="3" y="2" width="2" height="2"/><rect x="7" y="4" width="1" height="2"/><rect x="0" y="4" width="1" height="2"/><rect x="2" y="5" width="2" height="2"/><rect x="5" y="6" width="2" height="2"/></g></pattern></defs>
<polygon points="743,364 856,374.5 979.5,386.5 980,393 976.5,430 977,440 982,464 989,483 987.7,510 984.4,545 976,582 960,632 947.5,671 937,703.6 923.6,720 918.5,724.6 912,745 906,769 893,764 877,757 855,749 805,731 774,719.4 750,697.4 728.4,676 698.6,655.7 670.8,642 659,636.5 658,632.6 674,580.5 697,511.5 720.7,436.6 742.7,368.5" fill="url(#dots)" stroke="#000" stroke-width="1" shape-rendering="auto"/>
<polyline points="989,483 995.5,488 999.4,496 999.4,530 1000.5,548 1004.6,569.4 1009.7,588 1005.8,601 1003,617 996.5,635 996,648 998.4,656 994.7,667 988.4,677 976.4,694.6 959.5,705 949,713 945.6,724.4 936.4,746.6 933,760 926,775 913,774 906,769" fill="none" stroke="#000" stroke-width="1" shape-rendering="auto"/>
<g fill="#9b9dbd" stroke="#8587ad" stroke-width="1"><rect x="922" y="722" width="15" height="21" rx="4"/><rect x="919" y="754" width="15" height="20" rx="4"/></g>
<g fill="none" stroke="#c9cadf" stroke-width="1"><path d="M925 727h9M925 731h9M925 735h9M925 739h9M922 759h9M922 763h9M922 767h9M922 771h9"/></g>
<rect x="922" y="724" width="3" height="2" fill="#0a8a0a"/>
<g fill="#8b8b8b" stroke="#a4a4a4" stroke-width=".7" shape-rendering="auto"><rect x="740" y="361" width="6" height="6"/><rect x="740" y="366" width="6" height="6"/><rect x="735" y="380" width="6" height="6"/><rect x="733" y="388" width="6" height="6"/><rect x="731" y="396" width="6" height="6"/><rect x="729" y="402" width="6" height="6"/><rect x="726" y="409" width="6" height="6"/><rect x="724" y="414" width="6" height="6"/><rect x="722" y="422" width="6" height="6"/><rect x="720" y="426" width="6" height="6"/><rect x="718" y="434" width="6" height="6"/><rect x="714" y="444" width="6" height="6"/><rect x="712" y="449" width="6" height="6"/><rect x="710" y="456" width="6" height="6"/><rect x="708" y="465" width="6" height="6"/><rect x="703" y="479" width="6" height="6"/><rect x="702" y="485" width="6" height="6"/><rect x="698" y="494" width="6" height="6"/><rect x="694" y="508" width="6" height="6"/><rect x="689" y="523" width="6" height="6"/><rect x="685" y="535" width="6" height="6"/><rect x="681" y="546" width="6" height="6"/><rect x="677" y="557" width="6" height="6"/><rect x="675" y="562" width="6" height="6"/><rect x="674" y="568" width="6" height="6"/><rect x="671" y="578" width="6" height="6"/><rect x="670" y="583" width="6" height="6"/><rect x="668" y="588" width="6" height="6"/><rect x="664" y="598" width="6" height="6"/><rect x="661" y="610" width="6" height="6"/><rect x="658" y="620" width="6" height="6"/><rect x="655" y="630" width="6" height="6"/><rect x="657" y="635" width="6" height="6"/><rect x="668" y="639" width="6" height="6"/><rect x="686" y="649" width="6" height="6"/><rect x="696" y="653" width="6" height="6"/><rect x="705" y="658" width="6" height="6"/><rect x="715" y="665" width="6" height="6"/><rect x="725" y="673" width="6" height="6"/><rect x="736" y="683" width="6" height="6"/><rect x="738" y="680" width="6" height="6"/><rect x="747" y="694" width="6" height="6"/><rect x="758" y="705" width="6" height="6"/><rect x="764" y="711" width="6" height="6"/><rect x="768" y="714" width="6" height="6"/><rect x="771" y="716" width="6" height="6"/><rect x="784" y="722" width="6" height="6"/><rect x="802" y="728" width="6" height="6"/><rect x="817" y="733" width="6" height="6"/><rect x="829" y="737" width="6" height="6"/><rect x="839" y="740" width="6" height="6"/><rect x="852" y="746" width="6" height="6"/><rect x="874" y="754" width="6" height="6"/><rect x="890" y="761" width="6" height="6"/><rect x="895" y="763" width="6" height="6"/><rect x="900" y="765" width="6" height="6"/><rect x="852" y="371" width="6" height="6"/><rect x="857" y="371" width="6" height="6"/><rect x="870" y="373" width="6" height="6"/><rect x="897" y="377" width="6" height="6"/><rect x="901" y="377" width="6" height="6"/><rect x="942" y="380" width="6" height="6"/><rect x="970" y="383" width="6" height="6"/><rect x="976" y="383" width="6" height="6"/><rect x="977" y="390" width="6" height="6"/><rect x="976" y="400" width="6" height="6"/><rect x="975" y="413" width="6" height="6"/><rect x="974" y="426" width="6" height="6"/><rect x="974" y="436" width="6" height="6"/><rect x="976" y="448" width="6" height="6"/><rect x="979" y="461" width="6" height="6"/><rect x="982" y="470" width="6" height="6"/><rect x="987" y="479" width="6" height="6"/><rect x="982" y="481" width="6" height="6"/><rect x="982" y="485" width="6" height="6"/><rect x="984" y="490" width="6" height="6"/><rect x="985" y="507" width="6" height="6"/><rect x="984" y="520" width="6" height="6"/><rect x="983" y="531" width="6" height="6"/><rect x="981" y="542" width="6" height="6"/><rect x="980" y="554" width="6" height="6"/><rect x="977" y="564" width="6" height="6"/><rect x="974" y="572" width="6" height="6"/><rect x="973" y="579" width="6" height="6"/><rect x="971" y="589" width="6" height="6"/><rect x="968" y="600" width="6" height="6"/><rect x="964" y="612" width="6" height="6"/><rect x="961" y="620" width="6" height="6"/><rect x="957" y="629" width="6" height="6"/><rect x="953" y="639" width="6" height="6"/><rect x="949" y="652" width="6" height="6"/><rect x="946" y="659" width="6" height="6"/><rect x="944" y="668" width="6" height="6"/><rect x="942" y="680" width="6" height="6"/><rect x="938" y="690" width="6" height="6"/><rect x="934" y="701" width="6" height="6"/><rect x="930" y="707" width="6" height="6"/><rect x="926" y="712" width="6" height="6"/><rect x="921" y="717" width="6" height="6"/><rect x="916" y="722" width="6" height="6"/><rect x="912" y="730" width="6" height="6"/><rect x="909" y="742" width="6" height="6"/><rect x="904" y="753" width="6" height="6"/><rect x="904" y="758" width="6" height="6"/></g>
<g fill="#0000fe"><rect x="993" y="486" width="5" height="5"/><rect x="996" y="489" width="5" height="5"/><rect x="997" y="494" width="5" height="5"/><rect x="997" y="512" width="5" height="5"/><rect x="997" y="526" width="5" height="5"/><rect x="997" y="532" width="5" height="5"/><rect x="998" y="546" width="5" height="5"/><rect x="1002" y="567" width="5" height="5"/><rect x="1005" y="578" width="5" height="5"/><rect x="1007" y="586" width="5" height="5"/><rect x="1006" y="594" width="5" height="5"/><rect x="1003" y="599" width="5" height="5"/><rect x="1001" y="604" width="5" height="5"/><rect x="1000" y="610" width="5" height="5"/><rect x="1000" y="614" width="5" height="5"/><rect x="1000" y="620" width="5" height="5"/><rect x="999" y="624" width="5" height="5"/><rect x="994" y="632" width="5" height="5"/><rect x="994" y="638" width="5" height="5"/><rect x="994" y="645" width="5" height="5"/><rect x="996" y="650" width="5" height="5"/><rect x="996" y="656" width="5" height="5"/><rect x="992" y="664" width="5" height="5"/><rect x="986" y="675" width="5" height="5"/><rect x="978" y="687" width="5" height="5"/><rect x="974" y="692" width="5" height="5"/><rect x="966" y="698" width="5" height="5"/><rect x="957" y="702" width="5" height="5"/><rect x="951" y="706" width="5" height="5"/><rect x="947" y="709" width="5" height="5"/><rect x="946" y="714" width="5" height="5"/><rect x="943" y="722" width="5" height="5"/><rect x="937" y="735" width="5" height="5"/><rect x="934" y="744" width="5" height="5"/><rect x="931" y="755" width="5" height="5"/><rect x="906" y="768" width="5" height="5"/><rect x="911" y="771" width="5" height="5"/><rect x="916" y="770" width="5" height="5"/><rect x="924" y="772" width="5" height="5"/></g>
<path d="M824 563l3.500 3.500-3.500 3.500-3.500-3.500z" fill="#1c0047" shape-rendering="auto"/>
</svg>
<div class="a" style="left:307px;top:1000px;width:1330px;height:14px;background:linear-gradient(#fdfdfd,#ececec);border:1px solid #b8b8b8"></div>
<div class="a" style="left:320px;top:1001px;width:1px;height:12px;background:#d0d0d0"></div>
<div class="a" style="left:1522px;top:1001px;width:102px;height:12px;background:linear-gradient(#e9e9e9,#e0e0e0);border-left:1px solid #cfcfcf"></div>
<div class="a" style="left:1624px;top:1001px;width:1px;height:12px;background:#c4c4c4"></div>
<svg class="i" style="left:307px;top:1000px" width="1330" height="14"><path d="M10 4v7l-4-3.500z M1321.500 4v7l4-3.500z" fill="#555"/></svg>
<div class="a" style="left:0px;top:1018px;width:300px;height:20px;border:1px solid #c4c4c4;border-radius:2px;background:#efefef;"></div>
<div class="a" style="left:306px;top:1018px;width:200px;height:20px;border:1px solid #c4c4c4;border-radius:2px;background:#efefef;"></div>
<div class="a" style="left:512px;top:1018px;width:170px;height:20px;border:1px solid #c4c4c4;border-radius:2px;background:#efefef;"></div>
<div class="a" style="left:688px;top:1018px;width:73px;height:20px;border:1px solid #c4c4c4;border-radius:2px;background:#efefef;"></div>
<div class="a" style="left:1761px;top:1018px;width:109px;height:20px;border:1px solid #c4c4c4;border-radius:2px;background:#efefef;background:#f6f6f6;border-color:#b4b4b4;border-radius:3px"></div>
<div class="a" style="left:1876px;top:1018px;width:42px;height:20px;border:1px solid #c4c4c4;border-radius:2px;background:#efefef;"></div>
<span class="t" style="left:307.0px;top:1022.9px;font-size:11px;line-height:11px;letter-spacing:-0.206px;color:#000;font-family:"Liberation Sans",sans-serif;">Изменяемый слой: Косметический слой</span>
<span class="t" style="left:512.5px;top:1022.9px;font-size:11px;line-height:11px;letter-spacing:-0.084px;color:#000;font-family:"Liberation Sans",sans-serif;">Выбранный: Косметический слой</span>
<span class="t" style="left:705.0px;top:1022.9px;font-size:11px;line-height:11px;letter-spacing:0.052px;color:#000;font-family:"Liberation Sans",sans-serif;">Узлы: Вкл.</span>
<div class="a" style="left:692.5px;top:1024px;width:7px;height:7px;background:#7cba1f;border-radius:50%;border:1px solid #a5d455"></div>
<span class="t" style="left:1764.5px;top:1022.9px;font-size:11px;line-height:11px;letter-spacing:-0.145px;color:#000;font-family:"Liberation Sans",sans-serif;">План-схема (метры)</span>
<span class="t" style="left:1882.0px;top:1022.9px;font-size:11px;line-height:11px;color:#000;font-family:"Liberation Sans",sans-serif;">0</span>
<svg class="i" style="left:1895px;top:1019px" width="16" height="17" viewBox="0 0 16 17"><path d="M8 1.500c-3 0-4.500 2.200-4.500 5 0 3-1 4.500-2.300 6h13.600c-1.300-1.500-2.300-3-2.300-6 0-2.800-1.500-5-4.500-5z" fill="#f5b312"/><circle cx="8" cy="14" r="1.700" fill="#8a6a10"/><circle cx="8" cy="1.500" r="1" fill="#8a6a10"/></svg>
<svg class="i" style="left:0;top:1040px" width="1920" height="40" viewBox="0 0 1920 40">
<defs><linearGradient id="tb1" x1="0" x2="1"><stop offset="0" stop-color="#b5832b"/><stop offset=".35" stop-color="#bd8a2c"/><stop offset=".7" stop-color="#b6802b"/><stop offset="1" stop-color="#b4722c"/></linearGradient><linearGradient id="tb2" x1="0" x2="1"><stop offset="0" stop-color="#c6ab78"/><stop offset=".5" stop-color="#c2a878"/><stop offset="1" stop-color="#bfa674"/></linearGradient></defs>
<rect width="1920" height="40" fill="#b98a30"/>
<rect width="945" height="40" fill="url(#tb1)"/>
<path d="M500 40L640 0H945V40Z" fill="#a86f20" opacity=".18"/>
<path d="M942 0H1060L1069 40H935Z" fill="#9f803f"/>
<path d="M1060 0H1687L1790 40H1069Z" fill="url(#tb2)"/>
<path d="M1687 0H1920V40H1790Z" fill="#c99b3a"/>
<rect width="1920" height="1" fill="#a8772a" opacity=".6"/>
<rect x="113.500" y=".5" width="50.500" height="39" fill="#c89a50" stroke="#d9b983"/><rect x="164.500" y=".5" width="3.500" height="39" fill="#c89a50" stroke="#d9b983"/><rect x="168.500" y=".5" width="3.500" height="39" fill="#c89a50" stroke="#d9b983"/>
<rect x="237.500" y=".5" width="58.500" height="39" fill="#c99b50" stroke="#d6b179"/>
<rect x="300" y=".5" width="58" height="39" fill="#d3b27c" stroke="#f1e2b9"/>
<path d="M11.500 9.800L23 8v11.300H11.500zM24.300 7.800L38.300 5.600V19.300H24.300zM11.500 20.600H23V31.800L11.500 30.200zM24.300 20.600H38.300V34.300L24.300 32z" fill="#fff"/>
<g><path d="M91.500 23.500A11 11 0 1 1 92.300 17.500H72.500" fill="none" stroke="#35b3ee" stroke-width="5.400" transform="translate(0 .5)"/><path d="M73 20h19" stroke="#35b3ee" stroke-width="4.500"/><path d="M68.500 30.500c-4.500-3.500 1.500-13.500 9.500-19 7-5 14.500-6.500 16-3 .8 2-.5 4.500-1.500 6" fill="none" stroke="#f4c21a" stroke-width="2.300"/><path d="M68.500 30.500c1.500 1.500 5 .800 8-1" fill="none" stroke="#f4c21a" stroke-width="2.300"/></g>
<g><path d="M124 12h10l2 2.500h17.500V33H124z" fill="#f3d98b" stroke="#e4c46b"/><rect x="126" y="8.500" width="3.500" height="2" fill="#1eb23a"/><rect x="130" y="8.500" width="8" height="2" fill="#fff"/><rect x="135" y="11" width="3" height="2" fill="#d82c2c"/><rect x="138" y="11" width="8" height="2" fill="#fff"/><rect x="143" y="13.500" width="3" height="2" fill="#2c8be8"/><rect x="146" y="13.500" width="6" height="2" fill="#fff"/><path d="M126.500 16.500H154V34H124z" fill="#f6e2a3"/><path d="M127 26.500h23.500v9.500h-6V30.500h-11.500V36h-6z" fill="#8fcdf0" stroke="#5fa8d8" stroke-width=".8"/></g>
<g fill="none"><path d="M213.200 9.600A13 13 0 1 0 213.200 29.200" stroke="#fff" stroke-width="3"/><circle cx="204.400" cy="19.400" r="12" fill="#fff"/><path d="M212.400 19.400L220 9V30Z" fill="#b98a2d"/><path d="M211.300 12.200A9.600 9.600 0 1 0 211.300 26.600" stroke="#2d3f8f" stroke-width="4.600"/><circle cx="204.400" cy="19.400" r="4.300" fill="#d8264e"/></g>
<g><rect x="251.500" y="7.500" width="29" height="24" fill="#000" stroke="#8b8b8b"/><rect x="252" y="8" width="28" height="2" fill="#b9c4d8"/><text x="254.500" y="20.500" font-family="Liberation Mono,monospace" font-size="7.500" font-weight="bold" fill="#fff">C:\_</text></g>
<g transform="translate(309.500 -2.500) scale(2.050)"><path d="M2.500 5.300C4 5 5.500 4.200 7 4.200S10 6 12.500 6 16 4.300 17.700 4V17C16 17.400 14.500 18.400 12.500 18.400S9 16.900 7 16.900 4 17.800 2.500 18.200Z" fill="#fff" stroke="#ee6a2e" stroke-width="1"/><path d="M4.300 7.300C5.500 7 6 6.500 7 6.500S10 8 12.500 8 15 7 16 6.800V15.200C15 15.400 14 16.200 12.500 16.200S9 14.800 7 14.800 5.300 15.500 4.300 15.800Z" fill="#f07032"/><path d="M7 6.500C9 6.500 10 8 12.500 8V16.200C10 16.200 9 14.800 7 14.800Z" fill="#cb4322"/></g>
<path d="M1706.500 24.500h10l-5-5z" fill="#fff"/>
<g fill="none" stroke="#fff" stroke-width="1.500"><path d="M1730.500 13v18"/><path d="M1731 14c3-1.500 5 1.500 8 .5 1.500-.5 3 0 4.500.5l-1.500 5c-1.500-.5-3-1-4.500-.5-3 1-5-2-6.500-.5z" fill="#fff" stroke="none"/></g>
<g fill="none" stroke="#fff" stroke-width="1.400"><rect x="1758.500" y="14.500" width="10" height="9"/><path d="M1763.500 24v5M1759 29.500h9"/><rect x="1754.500" y="13.500" width="4.500" height="6" fill="#b9995a"/><path d="M1756.700 20v9.500h4"/></g>
<g><path d="M1777.500 17.500h3l4.500-5v17l-4.500-5h-3z" fill="#fff"/><circle cx="1788" cy="27" r="4.600" fill="#e02b2b"/><path d="M1786 25l4 4m0-4l-4 4" stroke="#fff" stroke-width="1.400"/></g>
</svg>
<span class="t" style="left:1807.0px;top:1055.3px;font-size:11.5px;line-height:11.5px;letter-spacing:-0.640px;color:#fff;font-family:"Liberation Sans",sans-serif;">ENG</span>
<span class="t" style="left:1861.0px;top:1047.8px;font-size:11.5px;line-height:11.5px;letter-spacing:-0.356px;color:#fff;font-family:"Liberation Sans",sans-serif;">14:40</span>
<span class="t" style="left:1846.5px;top:1067.8px;font-size:11.5px;line-height:11.5px;letter-spacing:-0.356px;color:#fff;font-family:"Liberation Sans",sans-serif;">21.10.2025</span>
<div class="a" style="left:1894px;top:161px;width:7px;height:2px;background:#8f99ab;border-radius:2px 2px 0 0;opacity:.7"></div>
<div class="a" style="left:1908px;top:161px;width:7px;height:2px;background:#8f99ab;border-radius:2px 2px 0 0;opacity:.7"></div>
<div class="a" style="left:1573px;top:163px;width:346px;height:822px;background:#f0c869;border:1px solid #d8ae52"></div>
<span class="t" style="left:1622.0px;top:172.5px;font-size:14.5px;line-height:14.5px;letter-spacing:0.272px;color:#3b3222;font-family:"Liberation Sans",sans-serif;">Координаты узлов объекта (метры)</span>
<div class="a" style="left:1891px;top:169px;width:19px;height:19px;background:#c9514b"></div>
<svg class="i" style="left:1891px;top:169px" width="19" height="19"><path d="M6.700 7l5.600 5.400m0-5.400l-5.600 5.400" stroke="#fff" stroke-width="1.600"/></svg>
<div class="a" style="left:1580px;top:193px;width:332px;height:785px;background:#f0f0f0;border:1px solid #e2c377;border-bottom-color:#f5e2b0;border-right-color:#f5e2b0"></div>
<div class="a" style="left:1590px;top:203px;width:312px;height:766px;background:#fff;border:1px solid #abadb3;border-top-color:#9a9a9a"></div>
<div class="a" style="left:1611px;top:204px;width:276px;height:13px;background:linear-gradient(#f4f9ff,#e8f2fe);border:1px solid #b9d7f5;border-radius:2px"></div>
<span class="t" style="left:1613.0px;top:206.2px;font-size:11px;line-height:11px;letter-spacing:-0.044px;color:#000;font-family:"Liberation Sans",sans-serif;">Полигон</span>
<span class="t" style="left:1633.3px;top:218.5px;font-size:11px;line-height:11px;letter-spacing:-0.040px;color:#000;font-family:"Liberation Sans",sans-serif;">Внешний контур</span>
<svg class="i" style="left:1616px;top:220px" width="10" height="8"><path d="M1 1.500h8.500L5.200 6.200z" fill="#595959"/></svg>
<div class="a" style="left:1888px;top:204px;width:13px;height:764px;background:#ebebeb;border-left:1px solid #dcdcdc"></div>
<div class="a" style="left:1888px;top:217px;width:13px;height:181px;background:linear-gradient(90deg,#fdfdfd,#f2f2f2);border:1px solid #c9c9c9"></div>
<div class="a" style="left:1888px;top:204px;width:13px;height:14px;background:linear-gradient(#fff,#f0f0f0);border:1px solid #c9c9c9"></div>
<div class="a" style="left:1888px;top:954px;width:13px;height:14px;background:linear-gradient(#fff,#f0f0f0);border:1px solid #c9c9c9"></div>
<svg class="i" style="left:1888px;top:204px" width="13" height="764"><path d="M3 9l3.500-4 3.500 4z M3 755l3.500 4 3.500-4z" fill="#555"/></svg>
<div class="a" style="left:1651px;top:230px;width:163px;height:738px;overflow:hidden"><div class="a" style="left:0;top:0;width:163px;height:760px;border-left:1px solid #000;border-right:1px solid #000;background:repeating-linear-gradient(#000 0 1px,transparent 1px 26px)"></div><div class="a" style="left:85px;top:0;width:1px;height:760px;background:#000"></div><span class="t" style="right:81.3px;top:8.7px;font-size:11px;line-height:11px;letter-spacing:-0.214px;color:#000;font-family:"Liberation Sans",sans-serif;">1 381 548,18м</span><span class="t" style="right:5.7px;top:8.7px;font-size:11px;line-height:11px;letter-spacing:-0.210px;color:#000;font-family:"Liberation Sans",sans-serif;">454 599,88м</span><span class="t" style="right:81.3px;top:34.7px;font-size:11px;line-height:11px;letter-spacing:-0.214px;color:#000;font-family:"Liberation Sans",sans-serif;">1 381 559,44м</span><span class="t" style="right:5.7px;top:34.7px;font-size:11px;line-height:11px;letter-spacing:-0.210px;color:#000;font-family:"Liberation Sans",sans-serif;">454 632,28м</span><span class="t" style="right:81.3px;top:60.7px;font-size:11px;line-height:11px;letter-spacing:-0.214px;color:#000;font-family:"Liberation Sans",sans-serif;">1 381 564,68м</span><span class="t" style="right:5.7px;top:60.7px;font-size:11px;line-height:11px;letter-spacing:-0.210px;color:#000;font-family:"Liberation Sans",sans-serif;">454 643,08м</span><span class="t" style="right:81.3px;top:86.7px;font-size:11px;line-height:11px;letter-spacing:-0.222px;color:#000;font-family:"Liberation Sans",sans-serif;">1 381 568,3м</span><span class="t" style="right:5.7px;top:86.7px;font-size:11px;line-height:11px;letter-spacing:-0.210px;color:#000;font-family:"Liberation Sans",sans-serif;">454 655,48м</span><span class="t" style="right:81.3px;top:112.7px;font-size:11px;line-height:11px;letter-spacing:-0.214px;color:#000;font-family:"Liberation Sans",sans-serif;">1 381 576,76м</span><span class="t" style="right:5.7px;top:112.7px;font-size:11px;line-height:11px;letter-spacing:-0.210px;color:#000;font-family:"Liberation Sans",sans-serif;">454 687,09м</span><span class="t" style="right:81.3px;top:138.7px;font-size:11px;line-height:11px;letter-spacing:-0.214px;color:#000;font-family:"Liberation Sans",sans-serif;">1 381 585,12м</span><span class="t" style="right:5.7px;top:138.7px;font-size:11px;line-height:11px;letter-spacing:-0.210px;color:#000;font-family:"Liberation Sans",sans-serif;">454 710,43м</span><span class="t" style="right:81.3px;top:164.7px;font-size:11px;line-height:11px;letter-spacing:-0.214px;color:#000;font-family:"Liberation Sans",sans-serif;">1 381 598,18м</span><span class="t" style="right:5.7px;top:164.7px;font-size:11px;line-height:11px;letter-spacing:-0.210px;color:#000;font-family:"Liberation Sans",sans-serif;">454 746,97м</span><span class="t" style="right:81.3px;top:190.7px;font-size:11px;line-height:11px;letter-spacing:-0.214px;color:#000;font-family:"Liberation Sans",sans-serif;">1 381 606,88м</span><span class="t" style="right:5.7px;top:190.7px;font-size:11px;line-height:11px;letter-spacing:-0.210px;color:#000;font-family:"Liberation Sans",sans-serif;">454 769,09м</span><span class="t" style="right:81.3px;top:216.7px;font-size:11px;line-height:11px;letter-spacing:-0.214px;color:#000;font-family:"Liberation Sans",sans-serif;">1 381 615,13м</span><span class="t" style="right:5.7px;top:216.7px;font-size:11px;line-height:11px;letter-spacing:-0.136px;color:#000;font-family:"Liberation Sans",sans-serif;">454 811,89м</span><span class="t" style="right:81.3px;top:242.7px;font-size:11px;line-height:11px;letter-spacing:-0.214px;color:#000;font-family:"Liberation Sans",sans-serif;">1 381 626,27м</span><span class="t" style="right:5.7px;top:242.7px;font-size:11px;line-height:11px;letter-spacing:-0.210px;color:#000;font-family:"Liberation Sans",sans-serif;">454 846,04м</span><span class="t" style="right:81.3px;top:268.7px;font-size:11px;line-height:11px;letter-spacing:-0.214px;color:#000;font-family:"Liberation Sans",sans-serif;">1 381 644,66м</span><span class="t" style="right:5.7px;top:268.7px;font-size:11px;line-height:11px;letter-spacing:-0.136px;color:#000;font-family:"Liberation Sans",sans-serif;">454 911,44м</span><span class="t" style="right:81.3px;top:294.7px;font-size:11px;line-height:11px;letter-spacing:-0.214px;color:#000;font-family:"Liberation Sans",sans-serif;">1 381 650,01м</span><span class="t" style="right:5.7px;top:294.7px;font-size:11px;line-height:11px;letter-spacing:-0.210px;color:#000;font-family:"Liberation Sans",sans-serif;">454 928,56м</span><span class="t" style="right:81.3px;top:320.7px;font-size:11px;line-height:11px;letter-spacing:-0.222px;color:#000;font-family:"Liberation Sans",sans-serif;">1 382 161,9м</span><span class="t" style="right:5.7px;top:320.7px;font-size:11px;line-height:11px;letter-spacing:-0.220px;color:#000;font-family:"Liberation Sans",sans-serif;">454 884,6м</span><span class="t" style="right:81.3px;top:346.7px;font-size:11px;line-height:11px;letter-spacing:-0.214px;color:#000;font-family:"Liberation Sans",sans-serif;">1 382 182,04м</span><span class="t" style="right:5.7px;top:346.7px;font-size:11px;line-height:11px;letter-spacing:-0.210px;color:#000;font-family:"Liberation Sans",sans-serif;">454 882,88м</span><span class="t" style="right:81.3px;top:372.7px;font-size:11px;line-height:11px;letter-spacing:-0.214px;color:#000;font-family:"Liberation Sans",sans-serif;">1 382 239,44м</span><span class="t" style="right:5.7px;top:372.7px;font-size:11px;line-height:11px;letter-spacing:-0.210px;color:#000;font-family:"Liberation Sans",sans-serif;">454 877,23м</span><span class="t" style="right:81.3px;top:398.7px;font-size:11px;line-height:11px;letter-spacing:-0.214px;color:#000;font-family:"Liberation Sans",sans-serif;">1 382 364,94м</span><span class="t" style="right:5.7px;top:398.7px;font-size:11px;line-height:11px;letter-spacing:-0.210px;color:#000;font-family:"Liberation Sans",sans-serif;">454 859,06м</span><span class="t" style="right:81.3px;top:424.7px;font-size:11px;line-height:11px;letter-spacing:-0.214px;color:#000;font-family:"Liberation Sans",sans-serif;">1 382 376,64м</span><span class="t" style="right:5.7px;top:424.7px;font-size:11px;line-height:11px;letter-spacing:-0.210px;color:#000;font-family:"Liberation Sans",sans-serif;">454 858,35м</span><span class="t" style="right:81.3px;top:450.7px;font-size:11px;line-height:11px;letter-spacing:-0.214px;color:#000;font-family:"Liberation Sans",sans-serif;">1 382 570,29м</span><span class="t" style="right:5.7px;top:450.7px;font-size:11px;line-height:11px;letter-spacing:-0.210px;color:#000;font-family:"Liberation Sans",sans-serif;">454 841,68м</span><span class="t" style="right:81.3px;top:476.7px;font-size:11px;line-height:11px;letter-spacing:-0.214px;color:#000;font-family:"Liberation Sans",sans-serif;">1 382 695,14м</span><span class="t" style="right:5.7px;top:476.7px;font-size:11px;line-height:11px;letter-spacing:-0.210px;color:#000;font-family:"Liberation Sans",sans-serif;">454 829,77м</span><span class="t" style="right:81.3px;top:502.7px;font-size:11px;line-height:11px;letter-spacing:-0.214px;color:#000;font-family:"Liberation Sans",sans-serif;">1 382 724,29м</span><span class="t" style="right:5.7px;top:502.7px;font-size:11px;line-height:11px;letter-spacing:-0.210px;color:#000;font-family:"Liberation Sans",sans-serif;">454 827,22м</span><span class="t" style="right:81.3px;top:528.7px;font-size:11px;line-height:11px;letter-spacing:-0.214px;color:#000;font-family:"Liberation Sans",sans-serif;">1 382 725,96м</span><span class="t" style="right:5.7px;top:528.7px;font-size:11px;line-height:11px;letter-spacing:-0.210px;color:#000;font-family:"Liberation Sans",sans-serif;">454 798,86м</span><span class="t" style="right:81.3px;top:554.7px;font-size:11px;line-height:11px;letter-spacing:-0.214px;color:#000;font-family:"Liberation Sans",sans-serif;">1 382 722,71м</span><span class="t" style="right:5.7px;top:554.7px;font-size:11px;line-height:11px;letter-spacing:-0.210px;color:#000;font-family:"Liberation Sans",sans-serif;">454 751,52м</span><span class="t" style="right:81.3px;top:580.7px;font-size:11px;line-height:11px;letter-spacing:-0.214px;color:#000;font-family:"Liberation Sans",sans-serif;">1 382 716,26м</span><span class="t" style="right:5.7px;top:580.7px;font-size:11px;line-height:11px;letter-spacing:-0.210px;color:#000;font-family:"Liberation Sans",sans-serif;">454 694,43м</span><span class="t" style="right:81.3px;top:606.7px;font-size:11px;line-height:11px;letter-spacing:-0.152px;color:#000;font-family:"Liberation Sans",sans-serif;">1 382 711,89м</span><span class="t" style="right:5.7px;top:606.7px;font-size:11px;line-height:11px;letter-spacing:-0.220px;color:#000;font-family:"Liberation Sans",sans-serif;">454 636,1м</span><span class="t" style="right:81.3px;top:632.7px;font-size:11px;line-height:11px;letter-spacing:-0.152px;color:#000;font-family:"Liberation Sans",sans-serif;">1 382 711,81м</span><span class="t" style="right:5.7px;top:632.7px;font-size:11px;line-height:11px;letter-spacing:-0.210px;color:#000;font-family:"Liberation Sans",sans-serif;">454 590,26м</span><span class="t" style="right:81.3px;top:658.7px;font-size:11px;line-height:11px;letter-spacing:-0.214px;color:#000;font-family:"Liberation Sans",sans-serif;">1 382 721,29м</span><span class="t" style="right:5.7px;top:658.7px;font-size:11px;line-height:11px;letter-spacing:-0.210px;color:#000;font-family:"Liberation Sans",sans-serif;">454 533,83м</span><span class="t" style="right:81.3px;top:684.7px;font-size:11px;line-height:11px;letter-spacing:-0.214px;color:#000;font-family:"Liberation Sans",sans-serif;">1 382 736,04м</span><span class="t" style="right:5.7px;top:684.7px;font-size:11px;line-height:11px;letter-spacing:-0.210px;color:#000;font-family:"Liberation Sans",sans-serif;">454 474,34м</span><span class="t" style="right:81.3px;top:710.7px;font-size:11px;line-height:11px;letter-spacing:-0.214px;color:#000;font-family:"Liberation Sans",sans-serif;">1 382 749,84м</span><span class="t" style="right:5.7px;top:710.7px;font-size:11px;line-height:11px;letter-spacing:-0.210px;color:#000;font-family:"Liberation Sans",sans-serif;">454 431,68м</span></div>
</body></html>
